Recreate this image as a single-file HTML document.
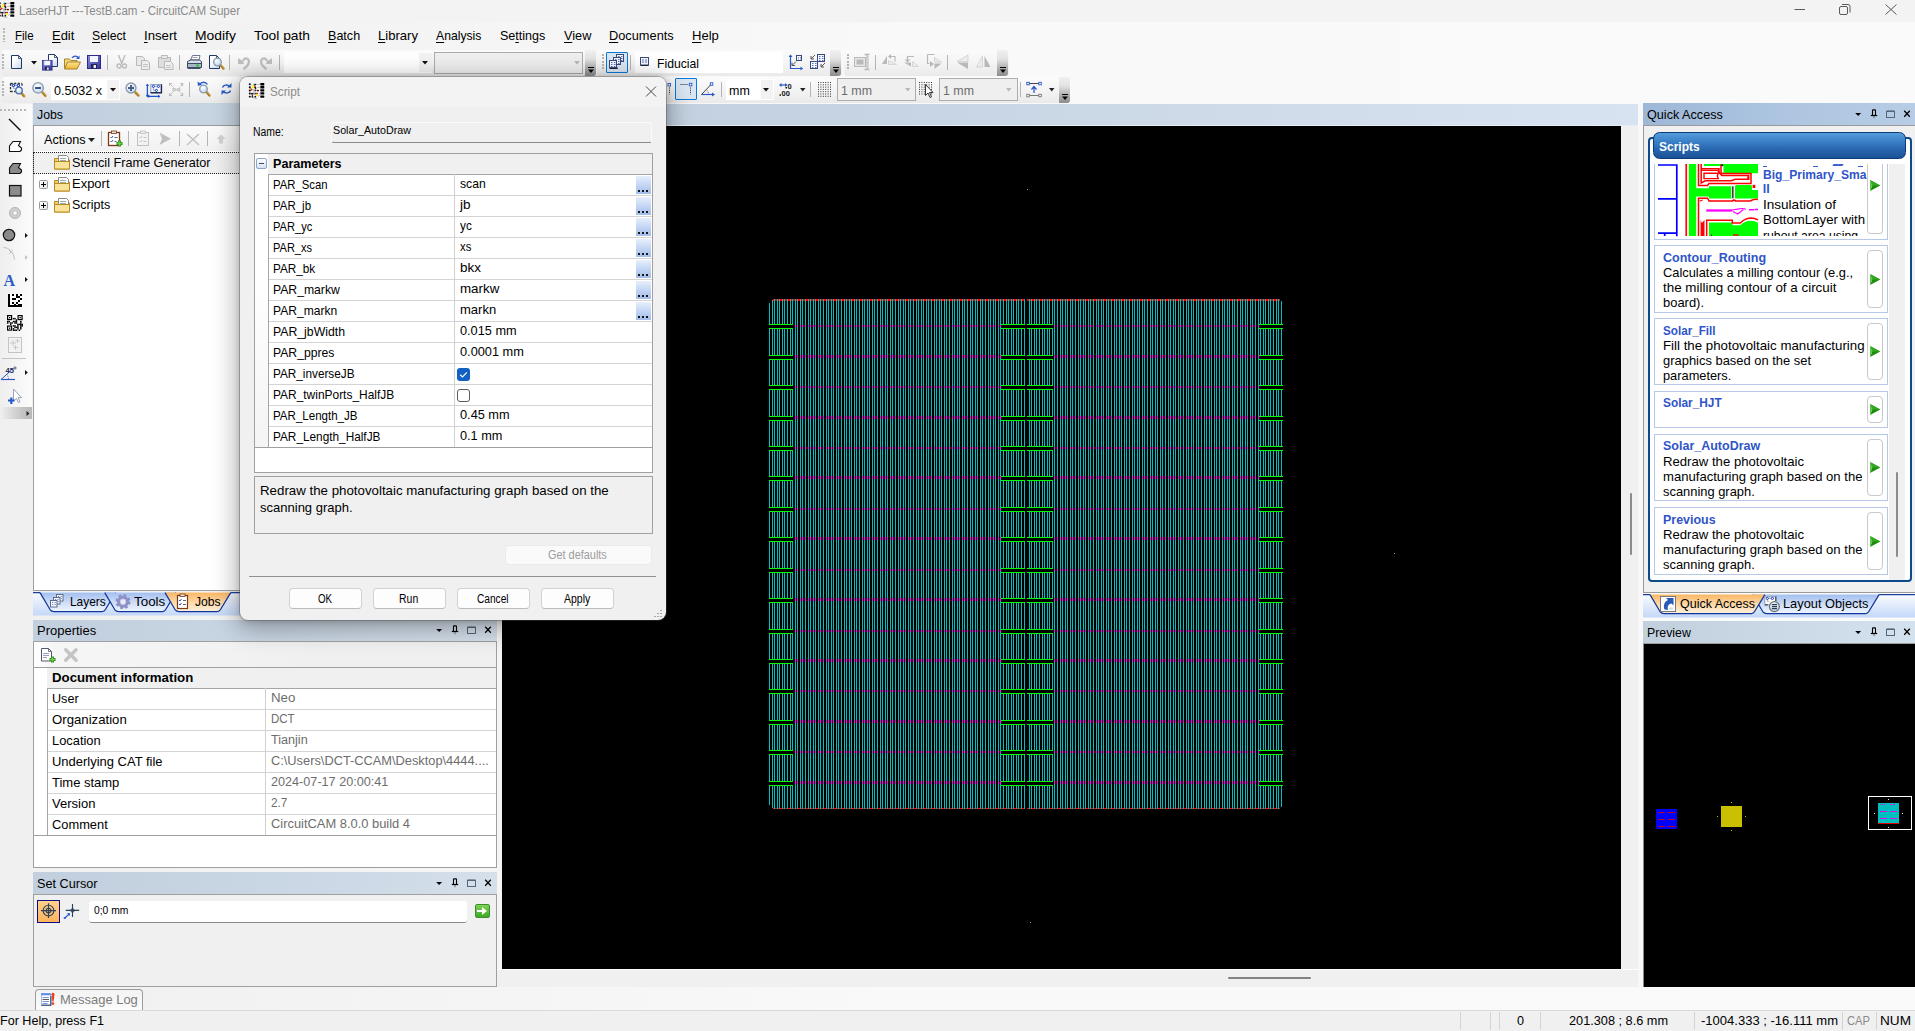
<!DOCTYPE html>
<html><head><meta charset="utf-8"><title>CircuitCAM</title><style>html,body{margin:0;padding:0;}
body{width:1915px;height:1031px;overflow:hidden;background:linear-gradient(90deg,#f0f0f0 0,#f4f4f4 400px,#f9f9f9 900px,#fafafa 100%);font-family:"Liberation Sans",sans-serif;position:relative;}
div{position:absolute;}
.t{white-space:nowrap;transform-origin:0 50%;}
.t u{text-decoration:underline;text-underline-offset:1.5px;text-decoration-thickness:1px;}
.a{position:absolute;display:block;overflow:visible;}
</style></head><body>
<!-- frame -->
<div style="left:0px;top:0px;width:1915px;height:22px;background:#f3f3f3;"></div>
<div class="t" style="left:19px;top:2.5px;height:16px;line-height:16px;font-size:12px;color:#8b8b8b;transform:scaleX(0.9617);">LaserHJT ---TestB.cam - CircuitCAM Super</div>
<svg class="a" style="left:-2.5px;top:2px" width="17" height="16" viewBox="0 0 17 16"><rect x="0" y="0" width="17" height="16" fill="#fbfbfb"/><rect x="12.300" y="0.1" width="4" height="2.300" rx=".5" fill="#000"/><rect x=".8" y="0.3" width="2" height="1.900" rx=".6" fill="#111"/><rect x="12.300" y="3.1" width="4" height="2.300" rx=".5" fill="#000"/><rect x=".8" y="3.3" width="2" height="1.900" rx=".6" fill="#111"/><rect x="12.300" y="6.3" width="4" height="2.300" rx=".5" fill="#000"/><rect x=".8" y="6.5" width="2" height="1.900" rx=".6" fill="#111"/><rect x="12.300" y="9.3" width="4" height="2.300" rx=".5" fill="#000"/><rect x=".8" y="9.5" width="2" height="1.900" rx=".6" fill="#111"/><rect x="12.300" y="12.5" width="4" height="2.300" rx=".5" fill="#000"/><rect x=".8" y="12.7" width="2" height="1.900" rx=".6" fill="#111"/><path d="M8.500 1.300h4M9 4.300h3.500M11 10.400h1.500M10 13.300l1.500-.8h1M2.500 1l1.500 1.500M5 14.500q2 1.800 4.500 .5" fill="none" stroke="#8a8a8a" stroke-width=".6"/><circle cx="6.3" cy="1.3" r="0.9" fill="#0a8a96"/><circle cx="7.6" cy="1.6" r="0.8" fill="#111"/><circle cx="6.6" cy="2.8" r="0.9" fill="#ff1010"/><circle cx="5.3" cy="2.6" r="0.9" fill="#f4f000"/><circle cx="4.6" cy="4.5" r="1" fill="#f4f000"/><circle cx="2.8" cy="5.4" r="0.7" fill="#8a8a10"/><circle cx="3.7" cy="6.7" r="0.9" fill="#ff1010"/><circle cx="7.2" cy="4.6" r="1" fill="#111"/><circle cx="7.6" cy="5.7" r="0.8" fill="#111"/><circle cx="7.2" cy="7.6" r="0.8" fill="#111"/><circle cx="9.3" cy="7.6" r="0.8" fill="#111"/><circle cx="10.3" cy="7.6" r="0.8" fill="#a00"/><circle cx="7.2" cy="10.6" r="0.8" fill="#111"/><circle cx="8.3" cy="10.5" r="0.8" fill="#8a0aa0"/><circle cx="9.3" cy="10.6" r="0.8" fill="#c01010"/><circle cx="8.8" cy="11.9" r="1.1" fill="#f4f000"/><circle cx="4" cy="10.8" r="1" fill="#111"/><circle cx="5" cy="10.8" r="0.8" fill="#111"/><circle cx="4.4" cy="12.7" r="0.8" fill="#a00"/><circle cx="4.4" cy="13.8" r="0.9" fill="#111"/><circle cx="7.3" cy="13.7" r="0.9" fill="#111"/><path d="M6 6q-1 3 1 6" fill="none" stroke="#9a9a9a" stroke-width=".9"/></svg>
<svg class="a" style="left:1790px;top:0" width="120" height="22" viewBox="0 0 120 22" fill="none" stroke="#5a5a5a" stroke-width="1"><path d="M4.5 9.5h10.5"/><rect x="49.5" y="6.5" width="8" height="8" rx="1.5"/><path d="M52 4.5h6a2 2 0 0 1 2 2v6"/><path d="M95.5 4.5l11 10M106.5 4.5l-11 10"/></svg>
<div style="left:0px;top:22px;width:1915px;height:28px;background:linear-gradient(90deg,#f0f0f0 0,#f4f4f4 400px,#f9f9f9 900px,#fafafa 100%);"></div>
<div style="left:2.5px;top:27.5px;width:2px;height:14px;background:repeating-linear-gradient(#b8b8b8 0 2px,transparent 2px 3.300px);"></div>
<div class="t" style="left:15.4px;top:27.0px;height:17px;line-height:17px;font-size:13.3px;color:#000;transform:scaleX(0.8683);"><u>F</u>ile</div>
<div class="t" style="left:51.9px;top:27.0px;height:17px;line-height:17px;font-size:13.3px;color:#000;transform:scaleX(0.9735);"><u>E</u>dit</div>
<div class="t" style="left:92.1px;top:27.0px;height:17px;line-height:17px;font-size:13.3px;color:#000;transform:scaleX(0.9174);"><u>S</u>elect</div>
<div class="t" style="left:144px;top:27.0px;height:17px;line-height:17px;font-size:13.3px;color:#000;transform:scaleX(0.9929);"><u>I</u>nsert</div>
<div class="t" style="left:194.8px;top:27.0px;height:17px;line-height:17px;font-size:13.3px;color:#000;transform:scaleX(1.0445);"><u>M</u>odify</div>
<div class="t" style="left:254px;top:27.0px;height:17px;line-height:17px;font-size:13.3px;color:#000;transform:scaleX(1.0382);">Tool <u>p</u>ath</div>
<div class="t" style="left:327.9px;top:27.0px;height:17px;line-height:17px;font-size:13.3px;color:#000;transform:scaleX(0.9441);"><u>B</u>atch</div>
<div class="t" style="left:377.9px;top:27.0px;height:17px;line-height:17px;font-size:13.3px;color:#000;transform:scaleX(0.9822);"><u>L</u>ibrary</div>
<div class="t" style="left:436px;top:27.0px;height:17px;line-height:17px;font-size:13.3px;color:#000;transform:scaleX(0.9166);"><u>A</u>nalysis</div>
<div class="t" style="left:500px;top:27.0px;height:17px;line-height:17px;font-size:13.3px;color:#000;transform:scaleX(0.9431);">Se<u>t</u>tings</div>
<div class="t" style="left:563.6px;top:27.0px;height:17px;line-height:17px;font-size:13.3px;color:#000;transform:scaleX(0.9583);"><u>V</u>iew</div>
<div class="t" style="left:608.9px;top:27.0px;height:17px;line-height:17px;font-size:13.3px;color:#000;transform:scaleX(0.9621);"><u>D</u>ocuments</div>
<div class="t" style="left:692px;top:27.0px;height:17px;line-height:17px;font-size:13.3px;color:#000;transform:scaleX(0.9801);"><u>H</u>elp</div>
<div style="left:2px;top:50px;width:594px;height:26px;background:linear-gradient(#fbfbfb,#f4f4f4 50%,#eaeaea);border-radius:3px;"></div>
<div style="left:597px;top:50px;width:245px;height:26px;background:linear-gradient(#fbfbfb,#f4f4f4 50%,#eaeaea);border-radius:3px;"></div>
<div style="left:844px;top:50px;width:165px;height:26px;background:linear-gradient(#fbfbfb,#f4f4f4 50%,#eaeaea);border-radius:3px;"></div>
<div style="left:2px;top:77px;width:238px;height:26px;background:linear-gradient(#fbfbfb,#f4f4f4 50%,#eaeaea);border-radius:3px;"></div>
<div style="left:662px;top:77px;width:408px;height:26px;background:linear-gradient(#fbfbfb,#f4f4f4 50%,#eaeaea);border-radius:3px;"></div>
<div style="left:0px;top:1010px;width:1915px;height:21px;background:#f0f0f0;border-top:1px solid #d9d9d9;box-sizing:border-box;"></div>
<div class="t" style="left:0px;top:1012.5px;height:16px;line-height:16px;font-size:12.6px;color:#000;transform:scaleX(0.9978);">For Help, press F1</div>
<div style="left:1460px;top:1012px;width:1px;height:18px;background:#d4d4d4;"></div>
<div style="left:1490px;top:1012px;width:1px;height:18px;background:#d4d4d4;"></div>
<div style="left:1499px;top:1012px;width:1px;height:18px;background:#d4d4d4;"></div>
<div style="left:1540px;top:1012px;width:1px;height:18px;background:#d4d4d4;"></div>
<div style="left:1694px;top:1012px;width:1px;height:18px;background:#d4d4d4;"></div>
<div style="left:1842px;top:1012px;width:1px;height:18px;background:#d4d4d4;"></div>
<div style="left:1876px;top:1012px;width:1px;height:18px;background:#d4d4d4;"></div>
<div class="t" style="left:1517px;top:1012.5px;height:16px;line-height:16px;font-size:12.6px;color:#000;">0</div>
<div class="t" style="left:1569px;top:1012.5px;height:16px;line-height:16px;font-size:12.6px;color:#000;transform:scaleX(1.0105);">201.308 ; 8.6 mm</div>
<div class="t" style="left:1701px;top:1012.5px;height:16px;line-height:16px;font-size:12.6px;color:#000;transform:scaleX(1.0342);">-1004.333 ; -16.111 mm</div>
<div class="t" style="left:1847px;top:1012.5px;height:16px;line-height:16px;font-size:12.6px;color:#8a8a8a;transform:scaleX(0.8878);">CAP</div>
<div class="t" style="left:1880px;top:1012.5px;height:16px;line-height:16px;font-size:12.6px;color:#000;transform:scaleX(1.0812);">NUM</div>
<!-- center -->
<div style="left:497px;top:104px;width:1141px;height:21px;background:linear-gradient(90deg,#c1cfde,#c6d3e2 30%,#d0dcea 70%,#d7e3f0);"></div>
<div style="left:497px;top:125px;width:1141px;height:1px;background:#e6edf5;"></div>
<div style="left:1638px;top:104px;width:5px;height:883px;background:#f8f8f8;"></div>
<div style="left:502px;top:126px;width:1119px;height:843px;background:#000;"></div>
<div style="left:1621px;top:126px;width:17px;height:861px;background:#f0f0f0;"></div>
<div style="left:1629.5px;top:493px;width:2px;height:62px;background:#8c8c8c;border-radius:1px;"></div>
<div style="left:497px;top:969px;width:1141px;height:18px;background:#f0f0f0;"></div>
<div style="left:1228px;top:977px;width:83px;height:2px;background:#828282;border-radius:1px;"></div>
<div style="left:497px;top:969px;width:1141px;height:1px;background:#fdfdfd;"></div>
<div style="left:1027px;top:189px;width:1px;height:1px;background:#9a9a9a;"></div>
<div style="left:1394px;top:553px;width:1px;height:1px;background:#9a9a9a;"></div>
<div style="left:1030px;top:922px;width:1px;height:1px;background:#9a9a9a;"></div>
<svg class="a" style="left:769px;top:299px" width="514" height="510" viewBox="0 0 514 510" shape-rendering="crispEdges"><defs><pattern id="pc" width="18" height="4" patternUnits="userSpaceOnUse"><rect x="0" y="0" width="1" height="4" fill="#00bfbf"/><rect x="3" y="0" width="1" height="4" fill="#00bfbf"/><rect x="5" y="0" width="1" height="4" fill="#00bfbf"/><rect x="8" y="0" width="1" height="4" fill="#00bfbf"/><rect x="10" y="0" width="1" height="4" fill="#00bfbf"/><rect x="13" y="0" width="1" height="4" fill="#00bfbf"/><rect x="15" y="0" width="1" height="4" fill="#00bfbf"/></pattern><pattern id="pm" width="18" height="4" patternUnits="userSpaceOnUse"><rect x="0" y="0" width="1" height="4" fill="#ff00ff"/><rect x="3" y="0" width="1" height="4" fill="#ff00ff"/><rect x="5" y="0" width="1" height="4" fill="#ff00ff"/><rect x="8" y="0" width="1" height="4" fill="#ff00ff"/><rect x="10" y="0" width="1" height="4" fill="#ff00ff"/><rect x="13" y="0" width="1" height="4" fill="#ff00ff"/><rect x="15" y="0" width="1" height="4" fill="#ff00ff"/></pattern></defs><rect x="3" y="0" width="508" height="2" fill="#ff0000"/><rect x="3" y="509" width="508" height="1" fill="#ff0000"/><rect x="0" y="0" width="514" height="510" fill="url(#pc)"/><path d="M0 0h4L0 4zM514 0h-4l4 4zM0 510h4L0 506zM514 510h-4l4 -4z" fill="#000"/><rect x="24" y="26" width="208" height="2" fill="#000"/><rect x="24" y="26" width="208" height="2" fill="url(#pm)"/><rect x="284" y="26" width="206" height="2" fill="#000"/><rect x="284" y="26" width="206" height="2" fill="url(#pm)"/><rect x="0" y="25" width="24" height="5" fill="#000"/><rect x="0" y="25" width="24" height="1" fill="#00ff00"/><rect x="0" y="29" width="24" height="1" fill="#00ff00"/><rect x="232" y="25" width="52" height="5" fill="#000"/><rect x="232" y="25" width="52" height="1" fill="#00ff00"/><rect x="232" y="29" width="52" height="1" fill="#00ff00"/><rect x="490" y="25" width="24" height="5" fill="#000"/><rect x="490" y="25" width="24" height="1" fill="#00ff00"/><rect x="490" y="29" width="24" height="1" fill="#00ff00"/><rect x="24" y="56" width="208" height="3" fill="#000"/><rect x="24" y="56" width="208" height="3" fill="url(#pm)"/><rect x="284" y="56" width="206" height="3" fill="#000"/><rect x="284" y="56" width="206" height="3" fill="url(#pm)"/><rect x="0" y="56" width="24" height="5" fill="#000"/><rect x="0" y="56" width="24" height="1" fill="#00ff00"/><rect x="0" y="60" width="24" height="1" fill="#00ff00"/><rect x="232" y="56" width="52" height="5" fill="#000"/><rect x="232" y="56" width="52" height="1" fill="#00ff00"/><rect x="232" y="60" width="52" height="1" fill="#00ff00"/><rect x="490" y="56" width="24" height="5" fill="#000"/><rect x="490" y="56" width="24" height="1" fill="#00ff00"/><rect x="490" y="60" width="24" height="1" fill="#00ff00"/><rect x="24" y="87" width="208" height="2" fill="#000"/><rect x="24" y="87" width="208" height="2" fill="url(#pm)"/><rect x="284" y="87" width="206" height="2" fill="#000"/><rect x="284" y="87" width="206" height="2" fill="url(#pm)"/><rect x="0" y="86" width="24" height="5" fill="#000"/><rect x="0" y="86" width="24" height="1" fill="#00ff00"/><rect x="0" y="90" width="24" height="1" fill="#00ff00"/><rect x="232" y="86" width="52" height="5" fill="#000"/><rect x="232" y="86" width="52" height="1" fill="#00ff00"/><rect x="232" y="90" width="52" height="1" fill="#00ff00"/><rect x="490" y="86" width="24" height="5" fill="#000"/><rect x="490" y="86" width="24" height="1" fill="#00ff00"/><rect x="490" y="90" width="24" height="1" fill="#00ff00"/><rect x="24" y="117" width="208" height="3" fill="#000"/><rect x="24" y="117" width="208" height="3" fill="url(#pm)"/><rect x="284" y="117" width="206" height="3" fill="#000"/><rect x="284" y="117" width="206" height="3" fill="url(#pm)"/><rect x="0" y="117" width="24" height="5" fill="#000"/><rect x="0" y="117" width="24" height="1" fill="#00ff00"/><rect x="0" y="121" width="24" height="1" fill="#00ff00"/><rect x="232" y="117" width="52" height="5" fill="#000"/><rect x="232" y="117" width="52" height="1" fill="#00ff00"/><rect x="232" y="121" width="52" height="1" fill="#00ff00"/><rect x="490" y="117" width="24" height="5" fill="#000"/><rect x="490" y="117" width="24" height="1" fill="#00ff00"/><rect x="490" y="121" width="24" height="1" fill="#00ff00"/><rect x="24" y="148" width="208" height="2" fill="#000"/><rect x="24" y="148" width="208" height="2" fill="url(#pm)"/><rect x="284" y="148" width="206" height="2" fill="#000"/><rect x="284" y="148" width="206" height="2" fill="url(#pm)"/><rect x="0" y="147" width="24" height="5" fill="#000"/><rect x="0" y="147" width="24" height="1" fill="#00ff00"/><rect x="0" y="151" width="24" height="1" fill="#00ff00"/><rect x="232" y="147" width="52" height="5" fill="#000"/><rect x="232" y="147" width="52" height="1" fill="#00ff00"/><rect x="232" y="151" width="52" height="1" fill="#00ff00"/><rect x="490" y="147" width="24" height="5" fill="#000"/><rect x="490" y="147" width="24" height="1" fill="#00ff00"/><rect x="490" y="151" width="24" height="1" fill="#00ff00"/><rect x="24" y="177" width="208" height="3" fill="#000"/><rect x="24" y="177" width="208" height="3" fill="url(#pm)"/><rect x="284" y="177" width="206" height="3" fill="#000"/><rect x="284" y="177" width="206" height="3" fill="url(#pm)"/><rect x="0" y="177" width="24" height="5" fill="#000"/><rect x="0" y="177" width="24" height="1" fill="#00ff00"/><rect x="0" y="181" width="24" height="1" fill="#00ff00"/><rect x="232" y="177" width="52" height="5" fill="#000"/><rect x="232" y="177" width="52" height="1" fill="#00ff00"/><rect x="232" y="181" width="52" height="1" fill="#00ff00"/><rect x="490" y="177" width="24" height="5" fill="#000"/><rect x="490" y="177" width="24" height="1" fill="#00ff00"/><rect x="490" y="181" width="24" height="1" fill="#00ff00"/><rect x="24" y="209" width="208" height="2" fill="#000"/><rect x="24" y="209" width="208" height="2" fill="url(#pm)"/><rect x="284" y="209" width="206" height="2" fill="#000"/><rect x="284" y="209" width="206" height="2" fill="url(#pm)"/><rect x="0" y="208" width="24" height="5" fill="#000"/><rect x="0" y="208" width="24" height="1" fill="#00ff00"/><rect x="0" y="212" width="24" height="1" fill="#00ff00"/><rect x="232" y="208" width="52" height="5" fill="#000"/><rect x="232" y="208" width="52" height="1" fill="#00ff00"/><rect x="232" y="212" width="52" height="1" fill="#00ff00"/><rect x="490" y="208" width="24" height="5" fill="#000"/><rect x="490" y="208" width="24" height="1" fill="#00ff00"/><rect x="490" y="212" width="24" height="1" fill="#00ff00"/><rect x="24" y="238" width="208" height="3" fill="#000"/><rect x="24" y="238" width="208" height="3" fill="url(#pm)"/><rect x="284" y="238" width="206" height="3" fill="#000"/><rect x="284" y="238" width="206" height="3" fill="url(#pm)"/><rect x="0" y="238" width="24" height="5" fill="#000"/><rect x="0" y="238" width="24" height="1" fill="#00ff00"/><rect x="0" y="242" width="24" height="1" fill="#00ff00"/><rect x="232" y="238" width="52" height="5" fill="#000"/><rect x="232" y="238" width="52" height="1" fill="#00ff00"/><rect x="232" y="242" width="52" height="1" fill="#00ff00"/><rect x="490" y="238" width="24" height="5" fill="#000"/><rect x="490" y="238" width="24" height="1" fill="#00ff00"/><rect x="490" y="242" width="24" height="1" fill="#00ff00"/><rect x="24" y="270" width="208" height="2" fill="#000"/><rect x="24" y="270" width="208" height="2" fill="url(#pm)"/><rect x="284" y="270" width="206" height="2" fill="#000"/><rect x="284" y="270" width="206" height="2" fill="url(#pm)"/><rect x="0" y="269" width="24" height="5" fill="#000"/><rect x="0" y="269" width="24" height="1" fill="#00ff00"/><rect x="0" y="273" width="24" height="1" fill="#00ff00"/><rect x="232" y="269" width="52" height="5" fill="#000"/><rect x="232" y="269" width="52" height="1" fill="#00ff00"/><rect x="232" y="273" width="52" height="1" fill="#00ff00"/><rect x="490" y="269" width="24" height="5" fill="#000"/><rect x="490" y="269" width="24" height="1" fill="#00ff00"/><rect x="490" y="273" width="24" height="1" fill="#00ff00"/><rect x="24" y="299" width="208" height="3" fill="#000"/><rect x="24" y="299" width="208" height="3" fill="url(#pm)"/><rect x="284" y="299" width="206" height="3" fill="#000"/><rect x="284" y="299" width="206" height="3" fill="url(#pm)"/><rect x="0" y="299" width="24" height="5" fill="#000"/><rect x="0" y="299" width="24" height="1" fill="#00ff00"/><rect x="0" y="303" width="24" height="1" fill="#00ff00"/><rect x="232" y="299" width="52" height="5" fill="#000"/><rect x="232" y="299" width="52" height="1" fill="#00ff00"/><rect x="232" y="303" width="52" height="1" fill="#00ff00"/><rect x="490" y="299" width="24" height="5" fill="#000"/><rect x="490" y="299" width="24" height="1" fill="#00ff00"/><rect x="490" y="303" width="24" height="1" fill="#00ff00"/><rect x="24" y="331" width="208" height="2" fill="#000"/><rect x="24" y="331" width="208" height="2" fill="url(#pm)"/><rect x="284" y="331" width="206" height="2" fill="#000"/><rect x="284" y="331" width="206" height="2" fill="url(#pm)"/><rect x="0" y="330" width="24" height="5" fill="#000"/><rect x="0" y="330" width="24" height="1" fill="#00ff00"/><rect x="0" y="334" width="24" height="1" fill="#00ff00"/><rect x="232" y="330" width="52" height="5" fill="#000"/><rect x="232" y="330" width="52" height="1" fill="#00ff00"/><rect x="232" y="334" width="52" height="1" fill="#00ff00"/><rect x="490" y="330" width="24" height="5" fill="#000"/><rect x="490" y="330" width="24" height="1" fill="#00ff00"/><rect x="490" y="334" width="24" height="1" fill="#00ff00"/><rect x="24" y="360" width="208" height="3" fill="#000"/><rect x="24" y="360" width="208" height="3" fill="url(#pm)"/><rect x="284" y="360" width="206" height="3" fill="#000"/><rect x="284" y="360" width="206" height="3" fill="url(#pm)"/><rect x="0" y="360" width="24" height="5" fill="#000"/><rect x="0" y="360" width="24" height="1" fill="#00ff00"/><rect x="0" y="364" width="24" height="1" fill="#00ff00"/><rect x="232" y="360" width="52" height="5" fill="#000"/><rect x="232" y="360" width="52" height="1" fill="#00ff00"/><rect x="232" y="364" width="52" height="1" fill="#00ff00"/><rect x="490" y="360" width="24" height="5" fill="#000"/><rect x="490" y="360" width="24" height="1" fill="#00ff00"/><rect x="490" y="364" width="24" height="1" fill="#00ff00"/><rect x="24" y="391" width="208" height="2" fill="#000"/><rect x="24" y="391" width="208" height="2" fill="url(#pm)"/><rect x="284" y="391" width="206" height="2" fill="#000"/><rect x="284" y="391" width="206" height="2" fill="url(#pm)"/><rect x="0" y="390" width="24" height="5" fill="#000"/><rect x="0" y="390" width="24" height="1" fill="#00ff00"/><rect x="0" y="394" width="24" height="1" fill="#00ff00"/><rect x="232" y="390" width="52" height="5" fill="#000"/><rect x="232" y="390" width="52" height="1" fill="#00ff00"/><rect x="232" y="394" width="52" height="1" fill="#00ff00"/><rect x="490" y="390" width="24" height="5" fill="#000"/><rect x="490" y="390" width="24" height="1" fill="#00ff00"/><rect x="490" y="394" width="24" height="1" fill="#00ff00"/><rect x="24" y="421" width="208" height="3" fill="#000"/><rect x="24" y="421" width="208" height="3" fill="url(#pm)"/><rect x="284" y="421" width="206" height="3" fill="#000"/><rect x="284" y="421" width="206" height="3" fill="url(#pm)"/><rect x="0" y="421" width="24" height="5" fill="#000"/><rect x="0" y="421" width="24" height="1" fill="#00ff00"/><rect x="0" y="425" width="24" height="1" fill="#00ff00"/><rect x="232" y="421" width="52" height="5" fill="#000"/><rect x="232" y="421" width="52" height="1" fill="#00ff00"/><rect x="232" y="425" width="52" height="1" fill="#00ff00"/><rect x="490" y="421" width="24" height="5" fill="#000"/><rect x="490" y="421" width="24" height="1" fill="#00ff00"/><rect x="490" y="425" width="24" height="1" fill="#00ff00"/><rect x="24" y="452" width="208" height="2" fill="#000"/><rect x="24" y="452" width="208" height="2" fill="url(#pm)"/><rect x="284" y="452" width="206" height="2" fill="#000"/><rect x="284" y="452" width="206" height="2" fill="url(#pm)"/><rect x="0" y="451" width="24" height="5" fill="#000"/><rect x="0" y="451" width="24" height="1" fill="#00ff00"/><rect x="0" y="455" width="24" height="1" fill="#00ff00"/><rect x="232" y="451" width="52" height="5" fill="#000"/><rect x="232" y="451" width="52" height="1" fill="#00ff00"/><rect x="232" y="455" width="52" height="1" fill="#00ff00"/><rect x="490" y="451" width="24" height="5" fill="#000"/><rect x="490" y="451" width="24" height="1" fill="#00ff00"/><rect x="490" y="455" width="24" height="1" fill="#00ff00"/><rect x="24" y="482" width="208" height="3" fill="#000"/><rect x="24" y="482" width="208" height="3" fill="url(#pm)"/><rect x="284" y="482" width="206" height="3" fill="#000"/><rect x="284" y="482" width="206" height="3" fill="url(#pm)"/><rect x="0" y="482" width="24" height="5" fill="#000"/><rect x="0" y="482" width="24" height="1" fill="#00ff00"/><rect x="0" y="486" width="24" height="1" fill="#00ff00"/><rect x="232" y="482" width="52" height="5" fill="#000"/><rect x="232" y="482" width="52" height="1" fill="#00ff00"/><rect x="232" y="486" width="52" height="1" fill="#00ff00"/><rect x="490" y="482" width="24" height="5" fill="#000"/><rect x="490" y="482" width="24" height="1" fill="#00ff00"/><rect x="490" y="486" width="24" height="1" fill="#00ff00"/><rect x="256" y="0" width="2" height="510" fill="#000"/></svg>
<!-- left -->
<div style="left:0px;top:104px;width:32px;height:315px;background:linear-gradient(90deg,#eeeeee,#f5f5f5 50%,#fbfbfb);"></div>
<div style="left:0px;top:109px;width:27px;height:2px;background:repeating-linear-gradient(90deg,#b8b8b8 0 2px,transparent 2px 4px);"></div>
<div style="left:0px;top:407px;width:32px;height:12px;background:linear-gradient(90deg,#f0f0f0,#c4c4c4 70%,#b8b8b8);"></div>
<svg class="a" style="left:26px;top:411px" width="4" height="5" viewBox="0 0 4 5"><path d="M0.5 0v5l3-2.500z" fill="#222"/></svg>
<div style="left:2px;top:358px;width:24px;height:1px;background:#c4c4c4;"></div>
<div style="left:33px;top:103px;width:464px;height:23px;background:linear-gradient(90deg,#c1cfde,#c7d4e2 40%,#d0dbe8 80%,#d6e0eb);"></div>
<div class="t" style="left:36.7px;top:106.7px;height:16px;line-height:16px;font-size:12.6px;color:#000;transform:scaleX(0.9777);">Jobs</div>
<div style="left:33px;top:125px;width:464px;height:26px;background:linear-gradient(#fbfbfb,#f1f1f1);border:1px solid #9c9c9c;border-bottom:none;box-sizing:border-box;"></div>
<div class="t" style="left:44.4px;top:132.0px;height:16px;line-height:16px;font-size:12.6px;color:#000;transform:scaleX(1.0073);">Actions</div>
<svg class="a" style="left:88px;top:138px" width="7" height="4" viewBox="0 0 7 4"><path d="M0 0h7l-3.500 4z" fill="#222"/></svg>
<div style="left:100.5px;top:131px;width:1px;height:15px;background:#b4b4b4;"></div>
<div style="left:128px;top:131px;width:1px;height:15px;background:#b4b4b4;"></div>
<div style="left:179px;top:131px;width:1px;height:15px;background:#b4b4b4;"></div>
<div style="left:207px;top:131px;width:1px;height:15px;background:#b4b4b4;"></div>
<div style="left:33px;top:151px;width:464px;height:440px;background:#fff;border:1px solid #a0a0a0;border-top:none;box-sizing:border-box;"></div>
<div style="left:34px;top:152px;width:462px;height:22px;background:#f0f0f0;"></div>
<div style="left:33px;top:152px;width:464px;height:22px;border:1px dotted #222;box-sizing:border-box;"></div>
<svg class="a" style="left:53px;top:154px" width="18" height="16" viewBox="0 0 18 16"><path d="M1.5 4.5h5l1.5 1.5h8.500v9h-15z" fill="#f3cf6a" stroke="#b98a1e"/><path d="M5.500 1.500h8l2 2v6h-10z" fill="#fff" stroke="#8a8a8a"/><path d="M7 4.500h6M7 6.500h6" stroke="#9aa" stroke-width="1"/><path d="M1.500 7.500h15v7.500h-15z" fill="#f9e29a" stroke="#b98a1e"/></svg>
<div class="t" style="left:72px;top:155.2px;height:16px;line-height:16px;font-size:12.6px;color:#000;transform:scaleX(1.0049);">Stencil Frame Generator</div>
<svg class="a" style="left:53px;top:176px" width="18" height="16" viewBox="0 0 18 16"><path d="M1.5 4.5h5l1.5 1.5h8.500v9h-15z" fill="#f3cf6a" stroke="#b98a1e"/><path d="M5.500 1.500h8l2 2v6h-10z" fill="#fff" stroke="#8a8a8a"/><path d="M7 4.500h6M7 6.500h6" stroke="#9aa" stroke-width="1"/><path d="M1.500 7.500h15v7.500h-15z" fill="#f9e29a" stroke="#b98a1e"/></svg>
<div class="t" style="left:72.2px;top:176.3px;height:16px;line-height:16px;font-size:12.6px;color:#000;transform:scaleX(1.0305);">Export</div>
<svg class="a" style="left:53px;top:197px" width="18" height="16" viewBox="0 0 18 16"><path d="M1.5 4.5h5l1.5 1.5h8.500v9h-15z" fill="#f3cf6a" stroke="#b98a1e"/><path d="M5.500 1.500h8l2 2v6h-10z" fill="#fff" stroke="#8a8a8a"/><path d="M7 4.500h6M7 6.500h6" stroke="#9aa" stroke-width="1"/><path d="M1.500 7.500h15v7.500h-15z" fill="#f9e29a" stroke="#b98a1e"/></svg>
<div class="t" style="left:72.2px;top:197.2px;height:16px;line-height:16px;font-size:12.6px;color:#000;transform:scaleX(0.9926);">Scripts</div>
<div style="left:39px;top:180px;width:9px;height:9px;border:1px solid #9a9a9a;border-radius:1.500px;background:linear-gradient(135deg,#fff,#e4e4ea);box-sizing:border-box;"></div>
<div style="left:41px;top:184px;width:5px;height:1px;background:#000;"></div>
<div style="left:43px;top:182px;width:1px;height:5px;background:#000;"></div>
<div style="left:39px;top:201px;width:9px;height:9px;border:1px solid #9a9a9a;border-radius:1.500px;background:linear-gradient(135deg,#fff,#e4e4ea);box-sizing:border-box;"></div>
<div style="left:41px;top:205px;width:5px;height:1px;background:#000;"></div>
<div style="left:43px;top:203px;width:1px;height:5px;background:#000;"></div>
<svg class="a" style="left:33px;top:591.5px" width="464" height="23.5" viewBox="0 0 464 23.5"><defs><linearGradient id="tb1" x1="0" y1="0" x2="0" y2="1"><stop offset="0" stop-color="#fbfcff"/><stop offset="1" stop-color="#c4d8f8"/></linearGradient><linearGradient id="ti1" x1="0" y1="0" x2="0" y2="1"><stop offset="0" stop-color="#a3bff0"/><stop offset=".55" stop-color="#cfdff8"/><stop offset="1" stop-color="#f0f5fd"/></linearGradient><linearGradient id="ta1" x1="0" y1="0" x2="0" y2="1"><stop offset="0" stop-color="#fbb765"/><stop offset=".5" stop-color="#fdd7a6"/><stop offset="1" stop-color="#fef0dc"/></linearGradient></defs><rect width="464" height="23.5" fill="url(#tb1)"/><path d="M0 .6H7.0M197.8 .6H464" stroke="#1c3f9a" stroke-width="1.200"/><path d="M7.0 .6L17.0 17.500Q18.5 19.500 21.0 19.500H69.2Q71.2 19.500 72.4 17.500L82.7 .6z" fill="url(#ti1)"/><path d="M7.0 .6L17.0 17.500Q18.5 19.500 21.0 19.500H69.2Q71.2 19.500 72.4 17.500L82.7 .6" fill="none" stroke="#12379a" stroke-width="1.250"/><path d="M71.7 .6L81.7 17.500Q83.2 19.500 85.7 19.500H129.5Q131.5 19.500 132.7 17.500L143.0 .6z" fill="url(#ti1)"/><path d="M71.7 .6L81.7 17.500Q83.2 19.500 85.7 19.500H129.5Q131.5 19.500 132.7 17.500L143.0 .6" fill="none" stroke="#12379a" stroke-width="1.250"/><path d="M132.0 .6L142.0 17.500Q143.5 19.500 146.0 19.500H184.3Q186.3 19.500 187.5 17.500L197.8 .6z" fill="url(#ta1)"/><path d="M132.0 .6L142.0 17.500Q143.5 19.500 146.0 19.500H184.3Q186.3 19.500 187.5 17.500L197.8 .6" fill="none" stroke="#12379a" stroke-width="1.250"/></svg>
<div class="t" style="left:69.6px;top:594.3px;height:16px;line-height:16px;font-size:12.6px;color:#000;transform:scaleX(0.9449);">Layers</div>
<div class="t" style="left:134.3px;top:594.3px;height:16px;line-height:16px;font-size:12.6px;color:#000;transform:scaleX(1.0650);">Tools</div>
<div class="t" style="left:194.7px;top:594.3px;height:16px;line-height:16px;font-size:12.6px;color:#000;transform:scaleX(0.9664);">Jobs</div>
<div style="left:33px;top:619.5px;width:464px;height:21.5px;background:linear-gradient(90deg,#c1cfde,#c7d4e2 40%,#d0dbe8 80%,#d6e0eb);"></div>
<div class="t" style="left:37.2px;top:622.8px;height:16px;line-height:16px;font-size:12.6px;color:#000;transform:scaleX(1.0318);">Properties</div>
<svg class="a" style="left:434.2px;top:620px" width="60" height="21" viewBox="0 0 60 21"><path d="M2.200 9h5.900l-2.950 3z" fill="#000"/><path d="M19.500 11.500v-5q0-.600 .600-.600h1.800q.600 0 .600 .600v5" fill="none" stroke="#000" stroke-width="1.100"/><path d="M17.800 11.500h6.400" stroke="#000" stroke-width="1.200"/><path d="M21 12v2.200" stroke="#445" stroke-width=".8"/><rect x="33.500" y="7.500" width="8" height="6" fill="none" stroke="#56667a" stroke-width="1"/><path d="M33.500 7h8" stroke="#56667a" stroke-width="1.200"/><path d="M51.200 6.700l5.600 6M56.800 6.700l-5.600 6" stroke="#000" stroke-width="1.250" fill="none"/></svg>
<div style="left:33px;top:641px;width:464px;height:227px;background:#fff;border:1px solid #a0a0a0;box-sizing:border-box;"></div>
<div style="left:34px;top:642px;width:462px;height:25px;background:linear-gradient(90deg,#fff,#f6f6f6 4%,#f0f0f0 60%);border-bottom:1px solid #a0a0a0;"></div>
<div style="left:47px;top:668px;width:449px;height:20px;background:#f0f0f0;"></div>
<div class="t" style="left:51.6px;top:670.0px;height:16px;line-height:16px;font-size:12.6px;color:#000;font-weight:bold;transform:scaleX(1.0515);">Document information</div>
<div style="left:47px;top:688px;width:449px;height:1px;background:#a6a6a6;"></div>
<div class="t" style="left:52.1px;top:691.2px;height:16px;line-height:16px;font-size:12.6px;color:#000;transform:scaleX(1.0008);">User</div>
<div class="t" style="left:271px;top:690.2px;height:16px;line-height:16px;font-size:12px;color:#6d6d6d;transform:scaleX(1.1083);">Neo</div>
<div style="left:47px;top:709px;width:449px;height:1px;background:#d4d4d4;"></div>
<div class="t" style="left:52.1px;top:712.2px;height:16px;line-height:16px;font-size:12.6px;color:#000;transform:scaleX(1.0466);">Organization</div>
<div class="t" style="left:271px;top:711.2px;height:16px;line-height:16px;font-size:12px;color:#6d6d6d;transform:scaleX(0.9566);">DCT</div>
<div style="left:47px;top:730px;width:449px;height:1px;background:#d4d4d4;"></div>
<div class="t" style="left:52.1px;top:733.2px;height:16px;line-height:16px;font-size:12.6px;color:#000;transform:scaleX(1.0211);">Location</div>
<div class="t" style="left:271px;top:732.2px;height:16px;line-height:16px;font-size:12px;color:#6d6d6d;transform:scaleX(1.0509);">Tianjin</div>
<div style="left:47px;top:751px;width:449px;height:1px;background:#d4d4d4;"></div>
<div class="t" style="left:52.1px;top:754.2px;height:16px;line-height:16px;font-size:12.6px;color:#000;transform:scaleX(1.0300);">Underlying CAT file</div>
<div class="t" style="left:271px;top:753.2px;height:16px;line-height:16px;font-size:12px;color:#6d6d6d;transform:scaleX(1.0675);">C:\Users\DCT-CCAM\Desktop\4444....</div>
<div style="left:47px;top:772px;width:449px;height:1px;background:#d4d4d4;"></div>
<div class="t" style="left:52.1px;top:775.2px;height:16px;line-height:16px;font-size:12.6px;color:#000;transform:scaleX(1.0309);">Time stamp</div>
<div class="t" style="left:271px;top:774.2px;height:16px;line-height:16px;font-size:12px;color:#6d6d6d;transform:scaleX(1.0531);">2024-07-17 20:00:41</div>
<div style="left:47px;top:793px;width:449px;height:1px;background:#d4d4d4;"></div>
<div class="t" style="left:52.1px;top:796.2px;height:16px;line-height:16px;font-size:12.6px;color:#000;transform:scaleX(1.0333);">Version</div>
<div class="t" style="left:271px;top:795.2px;height:16px;line-height:16px;font-size:12px;color:#6d6d6d;transform:scaleX(0.9777);">2.7</div>
<div style="left:47px;top:814px;width:449px;height:1px;background:#d4d4d4;"></div>
<div class="t" style="left:52.1px;top:817.2px;height:16px;line-height:16px;font-size:12.6px;color:#000;transform:scaleX(1.0208);">Comment</div>
<div class="t" style="left:271px;top:816.2px;height:16px;line-height:16px;font-size:12px;color:#6d6d6d;transform:scaleX(1.0744);">CircuitCAM 8.0.0 build 4</div>
<div style="left:34px;top:835px;width:462px;height:1px;background:#a0a0a0;"></div>
<div style="left:47px;top:688px;width:1px;height:147px;background:#a6a6a6;"></div>
<div style="left:265px;top:688px;width:1px;height:147px;background:#d0d0d0;"></div>
<div style="left:33px;top:872px;width:464px;height:22px;background:linear-gradient(90deg,#c1cfde,#c7d4e2 40%,#d0dbe8 80%,#d6e0eb);"></div>
<div class="t" style="left:37.2px;top:875.6px;height:16px;line-height:16px;font-size:12.6px;color:#000;transform:scaleX(1.0055);">Set Cursor</div>
<svg class="a" style="left:434.2px;top:873px" width="60" height="21" viewBox="0 0 60 21"><path d="M2.200 9h5.900l-2.950 3z" fill="#000"/><path d="M19.500 11.500v-5q0-.600 .600-.600h1.800q.600 0 .600 .600v5" fill="none" stroke="#000" stroke-width="1.100"/><path d="M17.800 11.500h6.400" stroke="#000" stroke-width="1.200"/><path d="M21 12v2.200" stroke="#445" stroke-width=".8"/><rect x="33.500" y="7.500" width="8" height="6" fill="none" stroke="#56667a" stroke-width="1"/><path d="M33.500 7h8" stroke="#56667a" stroke-width="1.200"/><path d="M51.200 6.700l5.600 6M56.800 6.700l-5.600 6" stroke="#000" stroke-width="1.250" fill="none"/></svg>
<div style="left:33px;top:894px;width:464px;height:93px;background:#f0f0f0;border:1px solid #a0a0a0;box-sizing:border-box;"></div>
<div style="left:37px;top:900px;width:23px;height:23px;background:linear-gradient(#ffd08c,#ffb45c);border:1.300px solid #0c0c84;box-sizing:border-box;"></div>
<svg class="a" style="left:40px;top:902px" width="17" height="17" viewBox="0 0 17 17" fill="none" stroke="#2c4258" stroke-width="1.150"><circle cx="8.500" cy="8.600" r="5.400"/><circle cx="8.500" cy="8.600" r="2.400"/><path d="M8.500 1.200v14.800M1 8.600h15"/></svg>
<svg class="a" style="left:63px;top:902px" width="18" height="18" viewBox="0 0 18 18" fill="none"><path d="M9.500 2v13M2.800 8.400h13.400" stroke="#2c4258" stroke-width="1.100"/><circle cx="9.500" cy="8.400" r="1.700" fill="none" stroke="#2c4258" stroke-width="1"/><path d="M1.800 16l4.500-4.200" stroke="#1a50d0" stroke-width="1.100"/><path d="M7 11l-3 .6 2.400 2.400z" fill="#1a50d0"/><path d="M.8 15l2 2M2.800 15l-2 2" stroke="#1a50d0" stroke-width=".9"/></svg>
<div style="left:89px;top:901px;width:378px;height:21.5px;background:#fff;border-bottom:1px solid #8a8a8a;border-radius:3px;box-sizing:border-box;"></div>
<div class="t" style="left:93.6px;top:902.8px;height:15px;line-height:15px;font-size:11.4px;color:#000;transform:scaleX(0.9060);">0;0 mm</div>
<div style="left:474.5px;top:904px;width:15px;height:14px;background:linear-gradient(#7dd355,#3fa82a);border:1px solid #3c8f2a;border-radius:2px;box-sizing:border-box;"></div>
<svg class="a" style="left:476px;top:906px" width="12" height="10" viewBox="0 0 12 10"><path d="M1 4h5v-3l5 4-5 4v-3h-5z" fill="#fff"/></svg>
<div style="left:35px;top:989px;width:108px;height:21px;background:linear-gradient(#f3f3f3,#fbfbfb);border:1px solid #9c9c9c;border-bottom:none;border-radius:4px 4px 0 0;box-sizing:border-box;"></div>
<div class="t" style="left:59.6px;top:991.7px;height:16px;line-height:16px;font-size:12.6px;color:#7c7c7c;transform:scaleX(1.0294);">Message Log</div>
<svg class="a" style="left:41px;top:992px" width="15" height="15" viewBox="0 0 15 15"><rect x=".5" y="1.500" width="9" height="11.500" fill="#fff" stroke="#9ab0d8" stroke-width=".8"/><rect x=".3" y="1.300" width="9.300" height="2" fill="#5a8af0"/><path d="M1.500 5.500h6.500M1.500 9.500h6.500M1.500 11.500h5" stroke="#6a8ad0" stroke-width=".9"/><path d="M1.500 7.500h6.500" stroke="#445" stroke-width=".9"/><path d="M.3 13.300h9.600v-9" fill="none" stroke="#1c3c6c" stroke-width="1.100"/><path d="M10.400 2q1.500-2.500 3.200 0l-1 7.500h-1.200z" fill="#ea401c"/><circle cx="12" cy="11.600" r="1.300" fill="#ea401c"/></svg>
<!-- right -->
<div style="left:1643px;top:103px;width:272px;height:22px;background:linear-gradient(90deg,#9db7d7,#adc5e0 50%,#b7cde6);"></div>
<div class="t" style="left:1647.2px;top:106.5px;height:16px;line-height:16px;font-size:12.6px;color:#000;transform:scaleX(1.0027);">Quick Access</div>
<svg class="a" style="left:1853px;top:104px" width="60" height="21" viewBox="0 0 60 21"><path d="M2.200 9h5.900l-2.950 3z" fill="#000"/><path d="M19.500 11.500v-5q0-.600 .600-.600h1.800q.600 0 .600 .600v5" fill="none" stroke="#000" stroke-width="1.100"/><path d="M17.800 11.500h6.400" stroke="#000" stroke-width="1.200"/><path d="M21 12v2.200" stroke="#445" stroke-width=".8"/><rect x="33.500" y="7.500" width="8" height="6" fill="none" stroke="#56667a" stroke-width="1"/><path d="M33.500 7h8" stroke="#56667a" stroke-width="1.200"/><path d="M51.200 6.700l5.600 6M56.800 6.700l-5.600 6" stroke="#000" stroke-width="1.250" fill="none"/></svg>
<div style="left:1643px;top:125px;width:272px;height:468px;background:#f0f0f0;border:1px solid #9a9a9a;border-right:none;box-sizing:border-box;"></div>
<div style="left:1647.5px;top:137px;width:264px;height:444.5px;background:#fff;border:2px solid #0c4a8c;border-radius:4px;box-sizing:border-box;"></div>
<div style="left:1653px;top:132px;width:253px;height:27px;background:linear-gradient(#549cdc,#3a80c6 35%,#2866b0 65%,#1b5296);border:1.500px solid #0c3a76;border-radius:6.500px;box-sizing:border-box;"></div>
<div class="t" style="left:1659.3px;top:138.5px;height:16px;line-height:16px;font-size:12.6px;color:#fff;font-weight:bold;transform:scaleX(0.9534);">Scripts</div>
<div style="left:1889px;top:164px;width:16px;height:416px;background:#f0f0f0;"></div>
<div style="left:1896px;top:472px;width:2px;height:85px;background:#8c8c8c;border-radius:1px;"></div>
<div style="left:1654px;top:164px;width:234px;height:76px;border:1px solid #b7c7e6;box-sizing:border-box;background:#fff;border-top:none;"></div>
<svg class="a" style="left:1658px;top:164px" width="100" height="72" viewBox="0 0 100 72"><rect width="100" height="72" fill="#fff"/><path d="M0 1h19.500M18.800 0.200v72M0 34.800h19M0 69.200h19M6.700 69v3" fill="none" stroke="#0000ff" stroke-width="1.700"/><rect x="27.400" y="0" width="1.700" height="72" fill="#ff0000"/><rect x="30.800" y="0" width="7.400" height="72" fill="#00ff00"/><path d="M46 0h54v9.300h-34.500v-7.400h-19.500z" fill="#00ff00"/><path d="M38 24.200h13v-2h23v12.300h-23v-2h-13z" fill="#00ff00"/><path d="M77 22.500q0-1.500 1.500-1.500h14.500q1 0 1 1.500v3.500h6v8.500h-23z" fill="#00ff00"/><path d="M51 58.500h23.500v2.800h8q4-4.500 10-4.500 4 0 7.500 2v13.200h-49z" fill="#00ff00"/><path d="M40.500 0v21.500h9l1.500-2h42v-10h-28q-2 0-2-2v-7.500" fill="none" stroke="#ff0000" stroke-width="1.500"/><path d="M43.200 0v19l4-2.200h26l4-1.500h13.500v-3.800h-26.500l-3.200-3.500v-3.300h-18" fill="none" stroke="#ff0000" stroke-width="1.500"/><path d="M43.200 6.300h16.500l1.500 2.500 3 3" fill="none" stroke="#ff0000" stroke-width="1.300"/><path d="M46 9.200h14.300l-1 2.700 1 2.700h-14.300z" fill="none" stroke="#ff0000" stroke-width="1.400"/><path d="M89.500 12.500q1.300 1.500 0 3.500" fill="none" stroke="#ff0000" stroke-width="1.300"/><circle cx="64.200" cy="1.200" r="1" fill="#111"/><rect x="94.600" y="20.800" width="2.700" height="3.200" fill="#ff0000"/><rect x="73.200" y="22" width="3.400" height="12.500" fill="#fff"/><rect x="74.200" y="22.300" width="1.300" height="12" fill="#111"/><path d="M40.500 72v-37.800h9l1.500 2.700h23.500q1.500-1.500 3 0h13q2 .5 4-1 2.500-1 5.500-.3" fill="none" stroke="#ff0000" stroke-width="1.500"/><path d="M41.700 37l3-1" stroke="#ff0000" stroke-width="1.200"/><path d="M48.300 46.500h26" stroke="#ff00ff" stroke-width="2.300"/><path d="M74 46l7-1.200q4-.800 7 .5M75 47.500l4.800 2.500 5.500-4.500" fill="none" stroke="#ff00ff" stroke-width="1.200"/><path d="M91 45.800h5M96.500 45.500h3.500" stroke="#ff00ff" stroke-width="1.600"/><path d="M42.600 56l1.300 3 2.600-3v16h-3.900z" fill="#ff0000"/><path d="M48.700 72v-15.700h25.600v2.800h8q4.500-5 10.500-5.200 4 0 7.200 2" fill="none" stroke="#ff0000" stroke-width="1.500"/><path d="M75 71h5.500" stroke="#ff0000" stroke-width="1.400"/><circle cx="53.500" cy="71.300" r=".7" fill="#111"/></svg>
<div class="t" style="left:1762.8px;top:166.7px;height:16px;line-height:16px;font-size:12.6px;color:#2f55c8;font-weight:bold;transform:scaleX(0.9600);">Big_Primary_Sma</div>
<div style="left:1763px;top:165.5px;width:4px;height:1.5px;background:#3a5ecc;"></div>
<div style="left:1813px;top:165.5px;width:5px;height:1.5px;background:#3a5ecc;"></div>
<div style="left:1858px;top:165.5px;width:5px;height:1.5px;background:#3a5ecc;"></div>
<div style="left:1832.5px;top:164px;width:4.5px;height:2px;background:#3a5ecc;transform:skewX(-30deg);"></div>
<div style="left:1838px;top:164px;width:4.5px;height:2px;background:#3a5ecc;transform:skewX(-30deg);"></div>
<div class="t" style="left:1762.8px;top:181.2px;height:16px;line-height:16px;font-size:12.6px;color:#2f55c8;font-weight:bold;">ll</div>
<div class="t" style="left:1762.8px;top:197.0px;height:16px;line-height:16px;font-size:12.6px;color:#000;transform:scaleX(1.0753);">Insulation of</div>
<div class="t" style="left:1762.8px;top:212.4px;height:16px;line-height:16px;font-size:12.6px;color:#000;transform:scaleX(1.0487);">BottomLayer with</div>
<div style="left:1763px;top:228px;width:105px;height:8px;overflow:hidden;"><div class="t" style="left:-.2px;top:0px;font-size:12.6px;line-height:16px;transform:scaleX(.97)">rubout area using</div></div>
<div style="left:1867px;top:164px;width:16px;height:70px;background:#fff;border:1px solid #c9c9c9;border-radius:4px;box-sizing:border-box;border-top:none;border-radius:0 0 4px 4px;"></div><svg class="a" style="left:1869.8px;top:179.5px" width="11" height="11" viewBox="0 0 11 11"><path d="M0 0l10.300 5.500-10.300 5.500 2.300-5.500z" fill="#1c8c0c"/><path d="M0 0l2.300 5.500 8-.0z" fill="#34a822"/><path d="M0 0l2.300 5.500-2.300 5.500z" fill="#5cc44a"/></svg>
<div style="left:1654px;top:245px;width:234px;height:68px;border:1px solid #b7c7e6;box-sizing:border-box;background:#fff;"></div>
<div class="t" style="left:1662.9px;top:249.7px;height:16px;line-height:16px;font-size:12.6px;color:#2f55c8;font-weight:bold;transform:scaleX(0.9955);">Contour_Routing</div>
<div class="t" style="left:1662.9px;top:265.1px;height:16px;line-height:16px;font-size:12.6px;color:#000;transform:scaleX(1.0208);">Calculates a milling contour (e.g.,</div>
<div class="t" style="left:1662.9px;top:280.2px;height:16px;line-height:16px;font-size:12.6px;color:#000;transform:scaleX(1.0636);">the milling contour of a circuit</div>
<div class="t" style="left:1662.9px;top:295.3px;height:16px;line-height:16px;font-size:12.6px;color:#000;transform:scaleX(1.0282);">board).</div>
<div style="left:1867px;top:250px;width:16px;height:58px;background:#fff;border:1px solid #c9c9c9;border-radius:4px;box-sizing:border-box;"></div><svg class="a" style="left:1869.8px;top:273.55px" width="11" height="11" viewBox="0 0 11 11"><path d="M0 0l10.300 5.500-10.300 5.500 2.300-5.500z" fill="#1c8c0c"/><path d="M0 0l2.300 5.500 8-.0z" fill="#34a822"/><path d="M0 0l2.300 5.500-2.300 5.500z" fill="#5cc44a"/></svg>
<div style="left:1654px;top:318px;width:234px;height:67px;border:1px solid #b7c7e6;box-sizing:border-box;background:#fff;"></div>
<div class="t" style="left:1662.9px;top:322.6px;height:16px;line-height:16px;font-size:12.6px;color:#2f55c8;font-weight:bold;transform:scaleX(0.9279);">Solar_Fill</div>
<div class="t" style="left:1662.9px;top:338.0px;height:16px;line-height:16px;font-size:12.6px;color:#000;transform:scaleX(1.0548);">Fill the photovoltaic manufacturing</div>
<div class="t" style="left:1662.9px;top:353.1px;height:16px;line-height:16px;font-size:12.6px;color:#000;transform:scaleX(1.0266);">graphics based on the set</div>
<div class="t" style="left:1662.9px;top:368.2px;height:16px;line-height:16px;font-size:12.6px;color:#000;transform:scaleX(1.0170);">parameters.</div>
<div style="left:1867px;top:323px;width:16px;height:57px;background:#fff;border:1px solid #c9c9c9;border-radius:4px;box-sizing:border-box;"></div><svg class="a" style="left:1869.8px;top:346.29999999999995px" width="11" height="11" viewBox="0 0 11 11"><path d="M0 0l10.300 5.500-10.300 5.500 2.300-5.500z" fill="#1c8c0c"/><path d="M0 0l2.300 5.500 8-.0z" fill="#34a822"/><path d="M0 0l2.300 5.500-2.300 5.500z" fill="#5cc44a"/></svg>
<div style="left:1654px;top:391px;width:234px;height:37px;border:1px solid #b7c7e6;box-sizing:border-box;background:#fff;"></div>
<div class="t" style="left:1662.9px;top:395.4px;height:16px;line-height:16px;font-size:12.6px;color:#2f55c8;font-weight:bold;transform:scaleX(0.9425);">Solar_HJT</div>
<div style="left:1867px;top:396px;width:16px;height:27px;background:#fff;border:1px solid #c9c9c9;border-radius:4px;box-sizing:border-box;"></div><svg class="a" style="left:1869.8px;top:404.2px" width="11" height="11" viewBox="0 0 11 11"><path d="M0 0l10.300 5.500-10.300 5.500 2.300-5.500z" fill="#1c8c0c"/><path d="M0 0l2.300 5.500 8-.0z" fill="#34a822"/><path d="M0 0l2.300 5.500-2.300 5.500z" fill="#5cc44a"/></svg>
<div style="left:1654px;top:434px;width:234px;height:67px;border:1px solid #b7c7e6;box-sizing:border-box;background:#fff;"></div>
<div class="t" style="left:1662.9px;top:438.4px;height:16px;line-height:16px;font-size:12.6px;color:#2f55c8;font-weight:bold;transform:scaleX(0.9923);">Solar_AutoDraw</div>
<div class="t" style="left:1662.9px;top:453.8px;height:16px;line-height:16px;font-size:12.6px;color:#000;transform:scaleX(1.0440);">Redraw the photovoltaic</div>
<div class="t" style="left:1662.9px;top:468.9px;height:16px;line-height:16px;font-size:12.6px;color:#000;transform:scaleX(1.0399);">manufacturing graph based on the</div>
<div class="t" style="left:1662.9px;top:484.0px;height:16px;line-height:16px;font-size:12.6px;color:#000;transform:scaleX(1.0237);">scanning graph.</div>
<div style="left:1867px;top:439px;width:16px;height:57px;background:#fff;border:1px solid #c9c9c9;border-radius:4px;box-sizing:border-box;"></div><svg class="a" style="left:1869.8px;top:462.25px" width="11" height="11" viewBox="0 0 11 11"><path d="M0 0l10.300 5.500-10.300 5.500 2.300-5.500z" fill="#1c8c0c"/><path d="M0 0l2.300 5.500 8-.0z" fill="#34a822"/><path d="M0 0l2.300 5.500-2.300 5.500z" fill="#5cc44a"/></svg>
<div style="left:1654px;top:507px;width:234px;height:68px;border:1px solid #b7c7e6;box-sizing:border-box;background:#fff;"></div>
<div class="t" style="left:1662.9px;top:511.5px;height:16px;line-height:16px;font-size:12.6px;color:#2f55c8;font-weight:bold;transform:scaleX(0.9890);">Previous</div>
<div class="t" style="left:1662.9px;top:526.9px;height:16px;line-height:16px;font-size:12.6px;color:#000;transform:scaleX(1.0440);">Redraw the photovoltaic</div>
<div class="t" style="left:1662.9px;top:542.0px;height:16px;line-height:16px;font-size:12.6px;color:#000;transform:scaleX(1.0399);">manufacturing graph based on the</div>
<div class="t" style="left:1662.9px;top:557.1px;height:16px;line-height:16px;font-size:12.6px;color:#000;transform:scaleX(1.0237);">scanning graph.</div>
<div style="left:1867px;top:512px;width:16px;height:58px;background:#fff;border:1px solid #c9c9c9;border-radius:4px;box-sizing:border-box;"></div><svg class="a" style="left:1869.8px;top:535.5px" width="11" height="11" viewBox="0 0 11 11"><path d="M0 0l10.300 5.500-10.300 5.500 2.300-5.500z" fill="#1c8c0c"/><path d="M0 0l2.300 5.500 8-.0z" fill="#34a822"/><path d="M0 0l2.300 5.500-2.300 5.500z" fill="#5cc44a"/></svg>
<svg class="a" style="left:1643px;top:593.5px" width="272" height="23.5" viewBox="0 0 272 23.5"><defs><linearGradient id="tb2" x1="0" y1="0" x2="0" y2="1"><stop offset="0" stop-color="#fbfcff"/><stop offset="1" stop-color="#c4d8f8"/></linearGradient><linearGradient id="ti2" x1="0" y1="0" x2="0" y2="1"><stop offset="0" stop-color="#a3bff0"/><stop offset=".55" stop-color="#cfdff8"/><stop offset="1" stop-color="#f0f5fd"/></linearGradient><linearGradient id="ta2" x1="0" y1="0" x2="0" y2="1"><stop offset="0" stop-color="#fbb765"/><stop offset=".5" stop-color="#fdd7a6"/><stop offset="1" stop-color="#fef0dc"/></linearGradient></defs><rect width="272" height="23.5" fill="url(#tb2)"/><path d="M0 .6H7.0M236.1 .6H272" stroke="#1c3f9a" stroke-width="1.200"/><path d="M109.7 .6L119.7 17.500Q121.2 19.500 123.7 19.500H222.6Q224.6 19.500 225.8 17.500L236.1 .6z" fill="url(#ti2)"/><path d="M109.7 .6L119.7 17.500Q121.2 19.500 123.7 19.500H222.6Q224.6 19.500 225.8 17.500L236.1 .6" fill="none" stroke="#12379a" stroke-width="1.250"/><path d="M7.0 .6L17.0 17.500Q18.5 19.500 21.0 19.500H108.4Q110.4 19.500 111.6 17.500L121.9 .6z" fill="url(#ta2)"/><path d="M7.0 .6L17.0 17.500Q18.5 19.500 21.0 19.500H108.4Q110.4 19.500 111.6 17.500L121.9 .6" fill="none" stroke="#12379a" stroke-width="1.250"/></svg>
<div class="t" style="left:1679.6px;top:596.3px;height:16px;line-height:16px;font-size:12.6px;color:#000;transform:scaleX(0.9921);">Quick Access</div>
<div class="t" style="left:1783.3px;top:596.3px;height:16px;line-height:16px;font-size:12.6px;color:#000;transform:scaleX(1.0169);">Layout Objects</div>
<svg class="a" style="left:1660px;top:596px" width="16" height="16" viewBox="0 0 16 16"><rect x=".5" y=".5" width="15" height="15" fill="#fff" stroke="#7a7a7a"/><path d="M4.500 13.500c-1.500-4 0-8 3.500-9.500l-2-2h7.500v7.500l-2-2c-3 .5-4.500 3-3.500 6.500z" fill="#2a5ab8"/><path d="M8 13.500h5v-2h-3z" fill="#d4dae2"/></svg>
<svg class="a" style="left:1764px;top:596px" width="17" height="17" viewBox="0 0 17 17"><defs><radialGradient id="lo" cx=".4" cy=".35" r=".8"><stop offset="0" stop-color="#fff"/><stop offset="1" stop-color="#b4d0f4"/></radialGradient></defs><rect x=".8" y=".8" width="11" height="8" fill="#fff" stroke="#9aa0aa" stroke-width="1"/><path d="M11.800 .5v4.500M.8 8.800h3" stroke="#3a4658" stroke-width="1.200"/><path d="M3.300 2.400h5M3.300 2.400v3h2" fill="none" stroke="#8a8a96" stroke-width=".7"/><circle cx="3.300" cy="2.400" r="1.100" fill="#fff" stroke="#1a40c8" stroke-width="1"/><circle cx="8.400" cy="2.400" r="1.100" fill="#fff" stroke="#1a40c8" stroke-width="1"/><circle cx="10.400" cy="10.600" r="5" fill="url(#lo)" stroke="#6e6e72" stroke-width="1.200"/><path d="M7.800 8.600h5.200M7.800 10.600h5.200M7.800 12.600h5.200" stroke="#2a3a52" stroke-width="1.100"/></svg>
<div style="left:1643px;top:621px;width:272px;height:22px;background:linear-gradient(90deg,#c2d0de,#cbd8e6 50%,#d4e1ee);"></div>
<div style="left:1643px;top:643px;width:272px;height:1px;background:#9c9c9c;"></div>
<div class="t" style="left:1647.2px;top:625.2px;height:16px;line-height:16px;font-size:12.6px;color:#000;transform:scaleX(0.9781);">Preview</div>
<svg class="a" style="left:1853px;top:622px" width="60" height="21" viewBox="0 0 60 21"><path d="M2.200 9h5.900l-2.950 3z" fill="#000"/><path d="M19.500 11.500v-5q0-.600 .600-.600h1.800q.600 0 .600 .600v5" fill="none" stroke="#000" stroke-width="1.100"/><path d="M17.800 11.500h6.400" stroke="#000" stroke-width="1.200"/><path d="M21 12v2.200" stroke="#445" stroke-width=".8"/><rect x="33.500" y="7.500" width="8" height="6" fill="none" stroke="#56667a" stroke-width="1"/><path d="M33.500 7h8" stroke="#56667a" stroke-width="1.200"/><path d="M51.200 6.700l5.600 6M56.800 6.700l-5.600 6" stroke="#000" stroke-width="1.250" fill="none"/></svg>
<div style="left:1643px;top:644px;width:272px;height:343px;background:#000;border-left:1px solid #8a8a8a;box-sizing:border-box;"></div>
<div style="left:1656px;top:809px;width:21px;height:20px;background:#0000ff;"></div>
<div style="left:1658px;top:812px;width:7px;height:1px;background:#c8001e;"></div>
<div style="left:1668px;top:812px;width:7px;height:1px;background:#c8001e;"></div>
<div style="left:1658px;top:819px;width:7px;height:1px;background:#c8001e;"></div>
<div style="left:1668px;top:819px;width:7px;height:1px;background:#c8001e;"></div>
<div style="left:1658px;top:826px;width:7px;height:1px;background:#c8001e;"></div>
<div style="left:1668px;top:826px;width:7px;height:1px;background:#c8001e;"></div>
<div style="left:1721px;top:806px;width:21px;height:21px;background:#c8c000;"></div>
<div style="left:1731px;top:802px;width:1px;height:1px;background:#c8c000;"></div>
<div style="left:1731px;top:830px;width:1px;height:1px;background:#c8c000;"></div>
<div style="left:1717px;top:816px;width:1px;height:1px;background:#c8c000;"></div>
<div style="left:1745px;top:816px;width:1px;height:1px;background:#c8c000;"></div>
<div style="left:1868px;top:796px;width:44px;height:34px;border:1px solid #fff;box-sizing:border-box;"></div>
<div style="left:1878px;top:803px;width:21px;height:20px;background:#00bfbf;"></div>
<div style="left:1878px;top:823px;width:21px;height:1px;background:#e00000;"></div>
<div style="left:1880px;top:811px;width:7px;height:1px;background:#ee00ee;"></div>
<div style="left:1890px;top:811px;width:7px;height:1px;background:#ee00ee;"></div>
<div style="left:1880px;top:818px;width:7px;height:1px;background:#ee00ee;"></div>
<div style="left:1890px;top:818px;width:7px;height:1px;background:#ee00ee;"></div>
<div style="left:1880px;top:804px;width:1px;height:1px;background:#ee00ee;"></div>
<div style="left:1882px;top:804px;width:1px;height:1px;background:#ee00ee;"></div>
<div style="left:1884px;top:804px;width:1px;height:1px;background:#ee00ee;"></div>
<div style="left:1890px;top:804px;width:2px;height:1px;background:#ee00ee;"></div>
<div style="left:1893px;top:804px;width:2px;height:1px;background:#ee00ee;"></div>
<div style="left:1888px;top:799px;width:1px;height:1px;background:#e8e8e8;"></div>
<div style="left:1888px;top:827px;width:1px;height:1px;background:#e8e8e8;"></div>
<div style="left:1874px;top:813px;width:1px;height:1px;background:#e8e8e8;"></div>
<div style="left:1902px;top:813px;width:1px;height:1px;background:#e8e8e8;"></div>
<!-- icons -->
<div style="left:2px;top:54px;width:2px;height:15px;background:repeating-linear-gradient(#b4b4b4 0 2px,transparent 2px 3.300px);"></div>
<svg class="a" style="left:10px;top:54px" width="95" height="17" viewBox="0 0 95 17" ><defs><linearGradient id="gdoc" x1="0" y1="0" x2="1" y2="1"><stop offset=".3" stop-color="#fff"/><stop offset="1" stop-color="#c9d6ee"/></linearGradient><linearGradient id="gdsk" x1="0" y1="0" x2="1" y2="1"><stop offset="0" stop-color="#8a8ee6"/><stop offset="1" stop-color="#34349a"/></linearGradient><linearGradient id="gfold" x1="0" y1="0" x2="0" y2="1"><stop offset="0" stop-color="#fbe59a"/><stop offset="1" stop-color="#eeb630"/></linearGradient><radialGradient id="glens" cx=".4" cy=".35" r=".7"><stop offset="0" stop-color="#fff"/><stop offset="1" stop-color="#b8d4f0"/></radialGradient></defs><path d="M1.5 1.5h7l3 3v10h-10z" fill="url(#gdoc)" stroke="#1f3864"/><path d="M8.5 1.5v3h3" fill="none" stroke="#1f3864" stroke-width=".8"/><path d="M38.5 0.5h6l3 3v9h-9z" fill="url(#gdoc)" stroke="#1f3864"/><path d="M44.5 0.5v3h3" fill="none" stroke="#1f3864" stroke-width=".8"/><g transform="translate(32,6) scale(0.75)"><rect x=".5" y=".5" width="13" height="13" fill="url(#gdsk)" stroke="#2a2a8a"/><rect x="3" y="1" width="8" height="6" fill="#f4f6ff"/><rect x="4" y="9" width="6" height="4.500" fill="#23234a"/><rect x="6.500" y="10" width="2.500" height="3" fill="#e8e8f0"/></g><path d="M54.500 15v-10h5l1.500 1.500h6v2" fill="#f5d67a" stroke="#a8842a"/><path d="M54.500 15l3-7h13l-3.500 7z" fill="url(#gfold)" stroke="#a8842a"/><path d="M62 4c1.500-2.500 5-2.500 6.500 0" fill="none" stroke="#2a5ac8" stroke-width="1.200"/><path d="M69.500 1.500v3.500h-3.500z" fill="#2a5ac8"/><g transform="translate(77,1) scale(1.0)"><rect x=".5" y=".5" width="13" height="13" fill="url(#gdsk)" stroke="#2a2a8a"/><rect x="3" y="1" width="8" height="6" fill="#f4f6ff"/><rect x="4" y="9" width="6" height="4.500" fill="#23234a"/><rect x="6.500" y="10" width="2.500" height="3" fill="#e8e8f0"/></g></svg>
<svg class="a" style="left:31px;top:61px" width="6" height="3.5" viewBox="0 0 6 3.5" ><path d="M0 0h6l-3.0 3.500z" fill="#111"/></svg>
<div style="left:107px;top:55px;width:1px;height:15px;background:#b4b4b4;"></div>
<svg class="a" style="left:115px;top:54px" width="62" height="17" viewBox="0 0 62 17" ><path d="M3.500 1l3.500 9M10 1l-3.500 9" stroke="#b9b9b9" stroke-width="1.300" fill="none"/><circle cx="4" cy="12" r="2" fill="none" stroke="#b9b9b9" stroke-width="1.300"/><circle cx="9.500" cy="12" r="2" fill="none" stroke="#b9b9b9" stroke-width="1.300"/><path d="M21.500 2.500h6l2 2v7h-8z" fill="#e9e9e9" stroke="#b9b9b9"/><path d="M26.500 6.500h6l2 2v7h-8z" fill="#ededed" stroke="#b9b9b9"/><path d="M28 10.500h5M28 12.500h5" stroke="#b9b9b9" stroke-width=".8"/><path d="M43.500 3.500h12v10h-12z" fill="#dedede" stroke="#b9b9b9"/><path d="M46.500 1.500h6v3h-6z" fill="#e8e8e8" stroke="#b9b9b9"/><path d="M49.500 7.500h6l2.500 2.500v5.500h-8.500z" fill="#f0f0f0" stroke="#b9b9b9"/><path d="M51 11.500h5M51 13.500h5" stroke="#b9b9b9" stroke-width=".8"/></svg>
<div style="left:179px;top:55px;width:1px;height:15px;background:#b4b4b4;"></div>
<svg class="a" style="left:186px;top:54px" width="40" height="17" viewBox="0 0 40 17" ><defs><linearGradient id="gdoc" x1="0" y1="0" x2="1" y2="1"><stop offset=".3" stop-color="#fff"/><stop offset="1" stop-color="#c9d6ee"/></linearGradient><linearGradient id="gdsk" x1="0" y1="0" x2="1" y2="1"><stop offset="0" stop-color="#8a8ee6"/><stop offset="1" stop-color="#34349a"/></linearGradient><linearGradient id="gfold" x1="0" y1="0" x2="0" y2="1"><stop offset="0" stop-color="#fbe59a"/><stop offset="1" stop-color="#eeb630"/></linearGradient><radialGradient id="glens" cx=".4" cy=".35" r=".7"><stop offset="0" stop-color="#fff"/><stop offset="1" stop-color="#b8d4f0"/></radialGradient></defs><path d="M4.500 6l2-4.500h7.500l-1 4.500z" fill="#fff" stroke="#6a7a8c"/><path d="M6.500 3.500h5" stroke="#889" stroke-width=".8"/><path d="M1.500 7.500l3-1.500h9l2 1.500v5h-14z" fill="#d6dde8" stroke="#3a4a66"/><path d="M1.500 9.500h14v4h-14z" fill="#aab6c8" stroke="#3a4a66"/><rect x="10" y="10.500" width="3" height="2" fill="#22cc22"/><path d="M0.500 13.500l1.500 1.500h12l1.500-1.500z" fill="#42506a"/><path d="M23.5 1.5h7l3 3v10h-10z" fill="url(#gdoc)" stroke="#1f3864"/><path d="M30.5 1.5v3h3" fill="none" stroke="#1f3864" stroke-width=".8"/><path d="M34.16 10.66L37.5 14.5" stroke="#c89a3c" stroke-width="2.600" stroke-linecap="round"/><path d="M34.559999999999995 11.56L37.3 15.2" stroke="#7a5a1c" stroke-width=".7"/><circle cx="31.5" cy="8" r="3.8" fill="url(#glens)" stroke="#8e9aa8" stroke-width="1.300"/></svg>
<div style="left:229px;top:55px;width:1px;height:15px;background:#b4b4b4;"></div>
<svg class="a" style="left:238px;top:57px" width="12" height="13" viewBox="0 0 12 13" ><path d="M6.300 11.500c3.200-2.500 5.200-5.500 4.500-8-.800-2.500-3.800-3-5.300-.500" fill="none" stroke="#bfbfbf" stroke-width="2.300" stroke-linecap="round"/><path d="M0 1.200l5.300 3 .5 2.800h-5.800z" fill="#bfbfbf"/></svg>
<svg class="a" style="left:260px;top:57px" width="12" height="13" viewBox="0 0 12 13" ><g transform="translate(12 0) scale(-1 1)"><path d="M6.300 11.500c3.200-2.500 5.200-5.500 4.500-8-.800-2.500-3.800-3-5.300-.500" fill="none" stroke="#bfbfbf" stroke-width="2.300" stroke-linecap="round"/><path d="M0 1.200l5.300 3 .5 2.800h-5.800z" fill="#bfbfbf"/></g></svg>
<div style="left:279px;top:55px;width:1px;height:15px;background:#b4b4b4;"></div>
<div style="left:284px;top:52px;width:148px;height:21px;background:#fff;"></div>
<div style="left:419px;top:53px;width:13px;height:19px;background:#f2f2f2;"></div>
<svg class="a" style="left:421.5px;top:61px" width="6" height="3.5" viewBox="0 0 6 3.5" ><path d="M0 0h6l-3.0 3.500z" fill="#111"/></svg>
<div style="left:434px;top:51.5px;width:149px;height:22px;background:#efefef;border:1px solid #adadad;box-sizing:border-box;"></div>
<svg class="a" style="left:573.5px;top:61px" width="6" height="3.5" viewBox="0 0 6 3.5" ><path d="M0 0h6l-3.0 3.500z" fill="#b8b8b8"/></svg>
<div style="left:584.5px;top:50px;width:11px;height:26px;background:linear-gradient(#f0f0f0 0%,#e2e2e2 35%,#a8a8a8 75%,#8c8c8c);border-radius:0 3px 3px 0;"></div><svg class="a" style="left:587.5px;top:67px" width="7" height="7" viewBox="0 0 7 7" ><path d="M0 0.500h6" stroke="#000" stroke-width="1"/><path d="M0 2.500h6l-3 3.500z" fill="#000"/><path d="M1.500 3h6l-3 3.500z" fill="#fff" opacity=".0"/></svg>
<div style="left:602px;top:54px;width:2px;height:15px;background:repeating-linear-gradient(#b4b4b4 0 2px,transparent 2px 3.300px);"></div>
<div style="left:606px;top:51.5px;width:22px;height:21.5px;background:#dae7f3;border:1.500px solid #0a7ad8;box-sizing:border-box;border-radius:1px;"></div>
<svg class="a" style="left:609px;top:54px" width="17" height="17" viewBox="0 0 17 17" ><rect x="7.5" y="0.5" width="7" height="7" fill="#f4f7ff" stroke="#3a4a7a"/><path d="M9 2.5h1.500M12 2.5h1.500M9 4.5h1.500M12 4.5h1.500M9 6.5h1.500M12 6.5h1.500" stroke="#4a66c0" stroke-width=".9"/><rect x="4.5" y="3.5" width="7" height="7" fill="#f4f7ff" stroke="#3a4a7a"/><path d="M6 5.5h1.500M9 5.5h1.500M6 7.5h1.500M9 7.5h1.500M6 9.5h1.500M9 9.5h1.500" stroke="#4a66c0" stroke-width=".9"/><rect x="0.5" y="6.5" width="7" height="7" fill="#f4f7ff" stroke="#3a4a7a"/><path d="M2 8.5h1.500M5 8.5h1.500M2 10.5h1.500M5 10.5h1.500M2 12.5h1.500M5 12.5h1.500" stroke="#4a66c0" stroke-width=".9"/><path d="M.5 14.500h8v-1" stroke="#223" fill="none"/></svg>
<div style="left:630px;top:55px;width:1px;height:15px;background:#b4b4b4;"></div>
<div style="left:635px;top:52px;width:148px;height:21px;background:#fff;"></div>
<svg class="a" style="left:640px;top:57px" width="9" height="9" viewBox="0 0 9 9" ><rect x=".5" y=".5" width="8" height="7.500" fill="#f4f7ff" stroke="#3a4a7a"/><path d="M2 3h2M5 3h2M2 5h2M5 5h2" stroke="#4a66c0" stroke-width=".9"/><path d="M.5 8.500h8" stroke="#223"/></svg>
<div class="t" style="left:656.5px;top:54.5px;height:17px;line-height:17px;font-size:13.3px;color:#000;transform:scaleX(0.9168);">Fiducial</div>
<svg class="a" style="left:787px;top:54px" width="40" height="16" viewBox="0 0 40 16" ><path d="M3.500 1v13.500h12" stroke="#2a5ac8" stroke-width="1.200" fill="none"/><path d="M1.500 3l2-2.500 2 2.500zM13.500 12.500l2.500 2-2.500 2z" fill="#2a5ac8"/><rect x="9.500" y="1.500" width="5" height="5" fill="#f4f7ff" stroke="#3a4a7a"/><path d="M11 3.500h.8M13 3.500h.8M11 5h.8M13 5h.8" stroke="#4a66c0" stroke-width=".8"/><path d="M9 7.500l-4 4M5 8.500v3h3" stroke="#555" stroke-width="1" fill="none"/><rect x="30.5" y="0.5" width="7" height="7" fill="#f4f7ff" stroke="#3a4a7a"/><path d="M32 2.5h1.500M35 2.5h1.500M32 4.5h1.500M35 4.5h1.500M32 6.5h1.500M35 6.5h1.500" stroke="#4a66c0" stroke-width=".9"/><rect x="23.5" y="7.5" width="7" height="7" fill="#f4f7ff" stroke="#3a4a7a"/><path d="M25 9.5h1.500M28 9.5h1.500M25 11.5h1.500M28 11.5h1.500M25 13.5h1.500M28 13.5h1.500" stroke="#4a66c0" stroke-width=".9"/><path d="M28 1l-4 4M24 2v3h3M38 9l-4 4M34 10v3h3" stroke="#555" stroke-width="1" fill="none"/></svg>
<div style="left:829.5px;top:50px;width:11px;height:26px;background:linear-gradient(#f0f0f0 0%,#e2e2e2 35%,#a8a8a8 75%,#8c8c8c);border-radius:0 3px 3px 0;"></div><svg class="a" style="left:832.5px;top:67px" width="7" height="7" viewBox="0 0 7 7" ><path d="M0 0.500h6" stroke="#000" stroke-width="1"/><path d="M0 2.500h6l-3 3.500z" fill="#000"/><path d="M1.500 3h6l-3 3.500z" fill="#fff" opacity=".0"/></svg>
<div style="left:847px;top:54px;width:2px;height:15px;background:repeating-linear-gradient(#b4b4b4 0 2px,transparent 2px 3.300px);"></div>
<svg class="a" style="left:854px;top:53px" width="140" height="18" viewBox="0 0 140 18" ><rect x=".5" y="4.500" width="11" height="9" fill="#e6e6e6" stroke="#b9b9b9"/><rect x="2.500" y="6.500" width="7" height="5" fill="#b9b9b9"/><path d="M10.500 1.500h5M10.500 16.500h5M13 1.500v15" stroke="#b9b9b9" stroke-width="1.300" fill="none"/><path d="M14.500 3v12" stroke="#d8d8d8"/><path d="M33 3v8h-5z" fill="#b9b9b9"/><path d="M34.500 11.500h8l-8-4z" fill="#ececec" stroke="#cfcfcf" stroke-width=".8"/><path d="M36 3.500h5v5" fill="none" stroke="#b9b9b9" stroke-width="1.200"/><path d="M34 3.500l3-2.500v5z" fill="#b9b9b9"/><path d="M50 9.500h7v4z" fill="#b9b9b9"/><path d="M58.500 13.500v-5l6 5z" fill="#ececec" stroke="#cfcfcf" stroke-width=".8"/><path d="M53.500 8v-4.500h6.500" fill="none" stroke="#b9b9b9" stroke-width="1.200"/><path d="M50.500 6.500h6l-3 3z" fill="#b9b9b9"/><path d="M73.500 1.500h7M73.500 1.500v9h2" fill="none" stroke="#b9b9b9" stroke-width="1.200"/><path d="M76 8v6l4-3z" fill="#b9b9b9"/><path d="M80.500 4.500l7 4.500h-7z" fill="#ececec" stroke="#cfcfcf" stroke-width=".8"/><path d="M80.500 10.500h7l-7 5.500z" fill="#b9b9b9"/><path d="M114 2v6.500h-11z" fill="#ececec" stroke="#cfcfcf" stroke-width=".8"/><path d="M114 9.500v6.500l-11-6.500z" fill="#b9b9b9"/><path d="M128.500 3v11h-6z" fill="#ececec" stroke="#cfcfcf" stroke-width=".8"/><path d="M130.500 3v11h6z" fill="#b9b9b9"/></svg>
<div style="left:875px;top:55px;width:1px;height:15px;background:#b4b4b4;"></div>
<div style="left:947px;top:55px;width:1px;height:15px;background:#b4b4b4;"></div>
<div style="left:997px;top:50px;width:11px;height:26px;background:linear-gradient(#f0f0f0 0%,#e2e2e2 35%,#a8a8a8 75%,#8c8c8c);border-radius:0 3px 3px 0;"></div><svg class="a" style="left:1000px;top:67px" width="7" height="7" viewBox="0 0 7 7" ><path d="M0 0.500h6" stroke="#000" stroke-width="1"/><path d="M0 2.500h6l-3 3.500z" fill="#000"/><path d="M1.500 3h6l-3 3.500z" fill="#fff" opacity=".0"/></svg>
<div style="left:2px;top:81px;width:2px;height:15px;background:repeating-linear-gradient(#b4b4b4 0 2px,transparent 2px 3.300px);"></div>
<svg class="a" style="left:9px;top:81px" width="18" height="17" viewBox="0 0 18 17" ><defs><linearGradient id="gdoc" x1="0" y1="0" x2="1" y2="1"><stop offset=".3" stop-color="#fff"/><stop offset="1" stop-color="#c9d6ee"/></linearGradient><linearGradient id="gdsk" x1="0" y1="0" x2="1" y2="1"><stop offset="0" stop-color="#8a8ee6"/><stop offset="1" stop-color="#34349a"/></linearGradient><linearGradient id="gfold" x1="0" y1="0" x2="0" y2="1"><stop offset="0" stop-color="#fbe59a"/><stop offset="1" stop-color="#eeb630"/></linearGradient><radialGradient id="glens" cx=".4" cy=".35" r=".7"><stop offset="0" stop-color="#fff"/><stop offset="1" stop-color="#b8d4f0"/></radialGradient></defs><path d="M1.500 2.500h11.500M1.500 2.500v8.500M1.500 10.500h5M13 2.500v3" fill="none" stroke="#2a3020" stroke-width="1.300" stroke-dasharray="2.200 1.400"/><path d="M4.400 4.400h5M4.400 4.400v3h2" fill="none" stroke="#7a8ab0" stroke-width=".7"/><circle cx="4.400" cy="4.400" r="1.150" fill="#fff" stroke="#1a40d8" stroke-width="1.100"/><circle cx="9.400" cy="4.400" r="1.150" fill="#fff" stroke="#1a40d8" stroke-width="1.100"/><path d="M12.309999999999999 11.809999999999999L15.2 15.2" stroke="#c89a3c" stroke-width="2.600" stroke-linecap="round"/><path d="M12.709999999999999 12.709999999999999L15.0 15.899999999999999" stroke="#7a5a1c" stroke-width=".7"/><circle cx="10" cy="9.5" r="3.3" fill="url(#glens)" stroke="#4a6aa0" stroke-width="1.300"/></svg>
<svg class="a" style="left:31px;top:81px" width="18" height="17" viewBox="0 0 18 17" ><defs><linearGradient id="gdoc" x1="0" y1="0" x2="1" y2="1"><stop offset=".3" stop-color="#fff"/><stop offset="1" stop-color="#c9d6ee"/></linearGradient><linearGradient id="gdsk" x1="0" y1="0" x2="1" y2="1"><stop offset="0" stop-color="#8a8ee6"/><stop offset="1" stop-color="#34349a"/></linearGradient><linearGradient id="gfold" x1="0" y1="0" x2="0" y2="1"><stop offset="0" stop-color="#fbe59a"/><stop offset="1" stop-color="#eeb630"/></linearGradient><radialGradient id="glens" cx=".4" cy=".35" r=".7"><stop offset="0" stop-color="#fff"/><stop offset="1" stop-color="#b8d4f0"/></radialGradient></defs><path d="M10.809999999999999 10.61L14.5 14.8" stroke="#c89a3c" stroke-width="2.600" stroke-linecap="round"/><path d="M11.209999999999999 11.51L14.3 15.5" stroke="#7a5a1c" stroke-width=".7"/><circle cx="7.1" cy="6.9" r="5.3" fill="url(#glens)" stroke="#8e9aa8" stroke-width="1.300"/><rect x="4.100" y="6.100" width="5.800" height="1.800" fill="#2a3c6c"/></svg>
<div style="left:51px;top:79px;width:69px;height:21px;background:#fff;"></div>
<div style="left:107px;top:80px;width:12px;height:19px;background:#f2f2f2;"></div>
<div class="t" style="left:54px;top:82.2px;height:17px;line-height:17px;font-size:13.3px;color:#000;transform:scaleX(0.9415);">0.5032 x</div>
<svg class="a" style="left:109.5px;top:88px" width="6" height="3.5" viewBox="0 0 6 3.5" ><path d="M0 0h6l-3.0 3.500z" fill="#111"/></svg>
<svg class="a" style="left:124px;top:81px" width="18" height="17" viewBox="0 0 18 17" ><defs><linearGradient id="gdoc" x1="0" y1="0" x2="1" y2="1"><stop offset=".3" stop-color="#fff"/><stop offset="1" stop-color="#c9d6ee"/></linearGradient><linearGradient id="gdsk" x1="0" y1="0" x2="1" y2="1"><stop offset="0" stop-color="#8a8ee6"/><stop offset="1" stop-color="#34349a"/></linearGradient><linearGradient id="gfold" x1="0" y1="0" x2="0" y2="1"><stop offset="0" stop-color="#fbe59a"/><stop offset="1" stop-color="#eeb630"/></linearGradient><radialGradient id="glens" cx=".4" cy=".35" r=".7"><stop offset="0" stop-color="#fff"/><stop offset="1" stop-color="#b8d4f0"/></radialGradient></defs><path d="M10.5 10.5L14.5 14.5" stroke="#c89a3c" stroke-width="2.600" stroke-linecap="round"/><path d="M10.9 11.4L14.3 15.2" stroke="#7a5a1c" stroke-width=".7"/><circle cx="7" cy="7" r="5" fill="url(#glens)" stroke="#8e9aa8" stroke-width="1.300"/><path d="M4 7h6M7 4v6" stroke="#4a5c8c" stroke-width="2"/></svg>
<svg class="a" style="left:145px;top:83px" width="18" height="15" viewBox="0 0 18 15" ><path d="M2.400 1v12.400h12.500" stroke="#2255cc" stroke-width="1.300" fill="none"/><path d="M.8 3l1.600-2.300 1.600 2.300zM.8 11.800l1.600 2.600 1.600-2.600zM13 11.800l2.400 1.600-2.400 1.600zM4.300 11.800l-2.300 1.600 2.300 1.600z" fill="#2255cc"/><rect x="5.800" y="1.600" width="10.800" height="8" fill="#f4f8ff" stroke="#8a9ab8" stroke-width="1"/><path d="M16.400 1.500v8.200h-10.800" fill="none" stroke="#1c2c4c" stroke-width="1.400"/><path d="M8.400 3.400h5M8.400 3.400v4h3" fill="none" stroke="#8a8a96" stroke-width=".7"/><circle cx="8.400" cy="3.400" r="1.100" fill="#fff" stroke="#1a40c8" stroke-width="1"/><circle cx="13.400" cy="3.400" r="1.100" fill="#fff" stroke="#1a40c8" stroke-width="1"/><circle cx="11.400" cy="7.400" r="1.100" fill="#fff" stroke="#1a40c8" stroke-width="1"/></svg>
<svg class="a" style="left:169px;top:83px" width="15" height="13" viewBox="0 0 15 13" ><path d="M2 2l3 3M13 2l-3 3M2 11l3-3M13 11l-3-3" stroke="#b9b9b9" stroke-width="1" stroke-dasharray="1.300 .7"/><path d="M0 0h3.200l-3.200 3.200zM14.200 0h-3.200l3.200 3.200zM0 13h3.200l-3.200-3.200zM14.200 13h-3.200l3.200-3.200z" fill="#b9b9b9"/><rect x="4" y="5.600" width="2" height="2.200" fill="none" stroke="#b9b9b9" stroke-width=".9"/><rect x="8.800" y="5.600" width="2" height="2.200" fill="none" stroke="#b9b9b9" stroke-width=".9"/><path d="M6 6.700h2.800" stroke="#b9b9b9" stroke-width=".9"/></svg>
<div style="left:189px;top:82px;width:1px;height:15px;background:#b4b4b4;"></div>
<svg class="a" style="left:196px;top:80px" width="17" height="18" viewBox="0 0 17 18" ><defs><linearGradient id="gdoc" x1="0" y1="0" x2="1" y2="1"><stop offset=".3" stop-color="#fff"/><stop offset="1" stop-color="#c9d6ee"/></linearGradient><linearGradient id="gdsk" x1="0" y1="0" x2="1" y2="1"><stop offset="0" stop-color="#8a8ee6"/><stop offset="1" stop-color="#34349a"/></linearGradient><linearGradient id="gfold" x1="0" y1="0" x2="0" y2="1"><stop offset="0" stop-color="#fbe59a"/><stop offset="1" stop-color="#eeb630"/></linearGradient><radialGradient id="glens" cx=".4" cy=".35" r=".7"><stop offset="0" stop-color="#fff"/><stop offset="1" stop-color="#b8d4f0"/></radialGradient></defs><path d="M10.16 11.66L13.5 15.5" stroke="#c89a3c" stroke-width="2.600" stroke-linecap="round"/><path d="M10.56 12.56L13.3 16.2" stroke="#7a5a1c" stroke-width=".7"/><circle cx="7.5" cy="9" r="3.8" fill="url(#glens)" stroke="#8e9aa8" stroke-width="1.300"/><path d="M3.500 4.500c2-3 6-3 8 0" fill="none" stroke="#2a5ac8" stroke-width="1.300"/><path d="M1.500 1.500l.5 4.500 4-1.500z" fill="#2a5ac8"/></svg>
<svg class="a" style="left:220px;top:82px" width="13" height="14" viewBox="0 0 13 14" ><path d="M2.500 5.500c.5-2.500 5-3.500 7-1" fill="none" stroke="#2a5ac8" stroke-width="1.400"/><path d="M11.500 1v4.500h-4.500z" fill="#2a5ac8"/><path d="M10.500 8.500c-.5 2.500-5 3.500-7 1" fill="none" stroke="#2a5ac8" stroke-width="1.400"/><path d="M1.500 13v-4.500h4.500z" fill="#2a5ac8"/></svg>
<svg class="a" style="left:666px;top:82px" width="6" height="14" viewBox="0 0 6 14" ><rect x="2" y="1.500" width="2.500" height="2.500" fill="#fff" stroke="#2a55c8" stroke-width=".9"/><path d="M3.500 5.500v7" stroke="#222" stroke-dasharray="1 1.200"/></svg>
<div style="left:675px;top:78px;width:22px;height:22px;background:#dae7f3;border:1.500px solid #0a7ad8;box-sizing:border-box;border-radius:1px;"></div>
<svg class="a" style="left:679px;top:82px" width="15" height="14" viewBox="0 0 15 14" ><path d="M1.500 2.500h8" stroke="#222" stroke-dasharray="1 1"/><rect x="10.300" y="1.300" width="2.500" height="2.500" fill="#fff" stroke="#2a55c8" stroke-width=".9"/><path d="M11.500 5.500v7" stroke="#222" stroke-dasharray="1 1.200"/></svg>
<svg class="a" style="left:700px;top:82px" width="16" height="15" viewBox="0 0 16 15" ><path d="M1.500 12.500h12" stroke="#2a5ac8" stroke-width="1.200"/><path d="M12 10.500l3 2-3 2z" fill="#2a5ac8"/><path d="M1.500 12.500l9.500-10" stroke="#444" stroke-width="1"/><rect x="10.300" y=".8" width="2.500" height="2.500" fill="#fff" stroke="#2a55c8" stroke-width=".9"/><path d="M7 8.500c1 1 1.500 2.500 1.500 4" fill="none" stroke="#444" stroke-dasharray="1 1" stroke-width=".9"/></svg>
<div style="left:721px;top:82px;width:1px;height:15px;background:#b4b4b4;"></div>
<div style="left:726px;top:79px;width:48px;height:21px;background:#fff;"></div>
<div style="left:761px;top:80px;width:12px;height:19px;background:#f2f2f2;"></div>
<div class="t" style="left:728.5px;top:82.4px;height:17px;line-height:17px;font-size:13.3px;color:#000;transform:scaleX(0.9388);">mm</div>
<svg class="a" style="left:763.2px;top:88px" width="6" height="3.5" viewBox="0 0 6 3.5" ><path d="M0 0h6l-3.0 3.500z" fill="#111"/></svg>
<svg class="a" style="left:779px;top:82px" width="14" height="15" viewBox="0 0 14 15" ><path d="M1.500 3h6" stroke="#2a5ac8" stroke-width="1.200"/><path d="M0 3l2.500-2v4zM8.500 3l-2.500-2v4z" fill="#2a5ac8"/><text x="8.500" y="7" font-family="Liberation Sans" font-size="7.500" font-weight="bold" fill="#111">0</text><rect x="6.500" y="5" width="1.500" height="1.500" fill="#111"/><text x="2.500" y="14" font-family="Liberation Sans" font-size="7.500" font-weight="bold" fill="#111">00</text><rect x=".5" y="12.300" width="1.500" height="1.500" fill="#111"/></svg>
<svg class="a" style="left:800px;top:88px" width="5.5" height="3.5" viewBox="0 0 5.5 3.5" ><path d="M0 0h5.5l-2.75 3.500z" fill="#222"/></svg>
<div style="left:810px;top:82px;width:1px;height:15px;background:#b4b4b4;"></div>
<svg class="a" style="left:818px;top:82px" width="15" height="15" viewBox="0 0 15 15" ><rect x="0.0" y="0.0" width="1" height="1" fill="#333"/><rect x="2.4" y="0.0" width="1" height="1" fill="#333"/><rect x="4.8" y="0.0" width="1" height="1" fill="#333"/><rect x="7.2" y="0.0" width="1" height="1" fill="#333"/><rect x="9.6" y="0.0" width="1" height="1" fill="#333"/><rect x="12.0" y="0.0" width="1" height="1" fill="#333"/><rect x="0.0" y="2.3" width="1" height="1" fill="#333"/><rect x="2.4" y="2.3" width="1" height="1" fill="#333"/><rect x="4.8" y="2.3" width="1" height="1" fill="#333"/><rect x="7.2" y="2.3" width="1" height="1" fill="#333"/><rect x="9.6" y="2.3" width="1" height="1" fill="#333"/><rect x="12.0" y="2.3" width="1" height="1" fill="#333"/><rect x="0.0" y="4.6" width="1" height="1" fill="#333"/><rect x="2.4" y="4.6" width="1" height="1" fill="#333"/><rect x="4.8" y="4.6" width="1" height="1" fill="#333"/><rect x="7.2" y="4.6" width="1" height="1" fill="#333"/><rect x="9.6" y="4.6" width="1" height="1" fill="#333"/><rect x="12.0" y="4.6" width="1" height="1" fill="#333"/><rect x="0.0" y="6.9" width="1" height="1" fill="#333"/><rect x="2.4" y="6.9" width="1" height="1" fill="#333"/><rect x="4.8" y="6.9" width="1" height="1" fill="#333"/><rect x="7.2" y="6.9" width="1" height="1" fill="#333"/><rect x="9.6" y="6.9" width="1" height="1" fill="#333"/><rect x="12.0" y="6.9" width="1" height="1" fill="#333"/><rect x="0.0" y="9.2" width="1" height="1" fill="#333"/><rect x="2.4" y="9.2" width="1" height="1" fill="#333"/><rect x="4.8" y="9.2" width="1" height="1" fill="#333"/><rect x="7.2" y="9.2" width="1" height="1" fill="#333"/><rect x="9.6" y="9.2" width="1" height="1" fill="#333"/><rect x="12.0" y="9.2" width="1" height="1" fill="#333"/><rect x="0.0" y="11.5" width="1" height="1" fill="#333"/><rect x="2.4" y="11.5" width="1" height="1" fill="#333"/><rect x="4.8" y="11.5" width="1" height="1" fill="#333"/><rect x="7.2" y="11.5" width="1" height="1" fill="#333"/><rect x="9.6" y="11.5" width="1" height="1" fill="#333"/><rect x="12.0" y="11.5" width="1" height="1" fill="#333"/><rect x="0.0" y="13.8" width="1" height="1" fill="#333"/><rect x="2.4" y="13.8" width="1" height="1" fill="#333"/><rect x="4.8" y="13.8" width="1" height="1" fill="#333"/><rect x="7.2" y="13.8" width="1" height="1" fill="#333"/><rect x="9.6" y="13.8" width="1" height="1" fill="#333"/><rect x="12.0" y="13.8" width="1" height="1" fill="#333"/></svg>
<div style="left:837px;top:78px;width:79px;height:23px;background:#efefef;border:1px solid #adadad;box-sizing:border-box;"></div>
<div class="t" style="left:841.3px;top:82.3px;height:17px;line-height:17px;font-size:13.3px;color:#6d6d6d;transform:scaleX(0.9328);">1 mm</div>
<svg class="a" style="left:904.6px;top:88px" width="5.5" height="3.5" viewBox="0 0 5.5 3.5" ><path d="M0 0h5.5l-2.75 3.500z" fill="#b8b8b8"/></svg>
<svg class="a" style="left:919px;top:82px" width="16" height="16" viewBox="0 0 16 16" ><rect x="0.0" y="0.0" width="1" height="1" fill="#333"/><rect x="2.4" y="0.0" width="1" height="1" fill="#333"/><rect x="4.8" y="0.0" width="1" height="1" fill="#333"/><rect x="7.2" y="0.0" width="1" height="1" fill="#333"/><rect x="9.6" y="0.0" width="1" height="1" fill="#333"/><rect x="12.0" y="0.0" width="1" height="1" fill="#333"/><rect x="0.0" y="2.3" width="1" height="1" fill="#333"/><rect x="2.4" y="2.3" width="1" height="1" fill="#333"/><rect x="4.8" y="2.3" width="1" height="1" fill="#333"/><rect x="7.2" y="2.3" width="1" height="1" fill="#333"/><rect x="9.6" y="2.3" width="1" height="1" fill="#333"/><rect x="12.0" y="2.3" width="1" height="1" fill="#333"/><rect x="0.0" y="4.6" width="1" height="1" fill="#333"/><rect x="2.4" y="4.6" width="1" height="1" fill="#333"/><rect x="4.8" y="4.6" width="1" height="1" fill="#333"/><rect x="7.2" y="4.6" width="1" height="1" fill="#333"/><rect x="9.6" y="4.6" width="1" height="1" fill="#333"/><rect x="12.0" y="4.6" width="1" height="1" fill="#333"/><rect x="0.0" y="6.9" width="1" height="1" fill="#333"/><rect x="2.4" y="6.9" width="1" height="1" fill="#333"/><rect x="4.8" y="6.9" width="1" height="1" fill="#333"/><rect x="7.2" y="6.9" width="1" height="1" fill="#333"/><rect x="9.6" y="6.9" width="1" height="1" fill="#333"/><rect x="12.0" y="6.9" width="1" height="1" fill="#333"/><rect x="0.0" y="9.2" width="1" height="1" fill="#333"/><rect x="2.4" y="9.2" width="1" height="1" fill="#333"/><rect x="4.8" y="9.2" width="1" height="1" fill="#333"/><rect x="7.2" y="9.2" width="1" height="1" fill="#333"/><rect x="9.6" y="9.2" width="1" height="1" fill="#333"/><rect x="12.0" y="9.2" width="1" height="1" fill="#333"/><rect x="0.0" y="11.5" width="1" height="1" fill="#333"/><rect x="2.4" y="11.5" width="1" height="1" fill="#333"/><rect x="4.8" y="11.5" width="1" height="1" fill="#333"/><rect x="7.2" y="11.5" width="1" height="1" fill="#333"/><rect x="9.6" y="11.5" width="1" height="1" fill="#333"/><rect x="12.0" y="11.5" width="1" height="1" fill="#333"/><path d="M6.500 2.500v11l2.500-2.500 2 4.500 1.500-.7-2-4.300h3.500z" fill="#fff" stroke="#222" stroke-width=".9"/></svg>
<div style="left:939px;top:78px;width:79px;height:23px;background:#efefef;border:1px solid #adadad;box-sizing:border-box;"></div>
<div class="t" style="left:943.1px;top:82.3px;height:17px;line-height:17px;font-size:13.3px;color:#6d6d6d;transform:scaleX(0.9328);">1 mm</div>
<svg class="a" style="left:1006px;top:88px" width="5.5" height="3.5" viewBox="0 0 5.5 3.5" ><path d="M0 0h5.5l-2.75 3.500z" fill="#b8b8b8"/></svg>
<div style="left:1020px;top:82px;width:1px;height:15px;background:#b4b4b4;"></div>
<svg class="a" style="left:1026px;top:81px" width="17" height="17" viewBox="0 0 17 17" ><path d="M2 2.500h12" stroke="#444"/><rect x=".8" y="1.300" width="2.500" height="2.500" fill="#fff" stroke="#2a55c8" stroke-width=".9"/><rect x="12.800" y="1.300" width="2.500" height="2.500" fill="#fff" stroke="#2a55c8" stroke-width=".9"/><path d="M2 14.500h12" stroke="#777"/><rect x=".8" y="13.300" width="2.500" height="2.500" fill="#fff" stroke="#777" stroke-width=".9"/><rect x="12.800" y="13.300" width="2.500" height="2.500" fill="#fff" stroke="#777" stroke-width=".9"/><path d="M8 12v-6M5.500 8.500l2.500-3 2.500 3" fill="none" stroke="#2a55c8" stroke-width="1.200"/></svg>
<svg class="a" style="left:1048.9px;top:87.5px" width="5.5" height="3.5" viewBox="0 0 5.5 3.5" ><path d="M0 0h5.5l-2.75 3.500z" fill="#222"/></svg>
<div style="left:1058.5px;top:77px;width:11px;height:26px;background:linear-gradient(#f0f0f0 0%,#e2e2e2 35%,#a8a8a8 75%,#8c8c8c);border-radius:0 3px 3px 0;"></div><svg class="a" style="left:1061.5px;top:94px" width="7" height="7" viewBox="0 0 7 7" ><path d="M0 0.500h6" stroke="#000" stroke-width="1"/><path d="M0 2.500h6l-3 3.500z" fill="#000"/><path d="M1.500 3h6l-3 3.500z" fill="#fff" opacity=".0"/></svg>
<!-- icons2 -->
<svg class="a" style="left:0px;top:116px" width="32" height="300" viewBox="0 0 32 300" ><path d="M9 3l11.500 11.500" stroke="#111" stroke-width="1.400"/><path d="M9.500 35.500v-5.500l3.500-4.500h7.500l-2 4 3 2.500v2l-1.500 1.500z" fill="#fff" stroke="#111" stroke-width="1.100"/><path d="M9.500 57.500v-5.500l3.500-4.500h7.500l-2 4 3 2.500v2l-1.500 1.500z" fill="#8a8a8a" stroke="#111" stroke-width="1.100"/><rect x="9.500" y="69.500" width="11.500" height="10.500" fill="#8c8c8c" stroke="#111" stroke-width="1.200"/><circle cx="15" cy="97" r="5.500" fill="#cfcfcf" stroke="#b4b4b4"/><circle cx="15" cy="97" r="2.200" fill="#fff" stroke="#b4b4b4" stroke-width=".8"/><circle cx="9" cy="119" r="5.700" fill="#8a8a8a" stroke="#111" stroke-width="1.200"/><path d="M3.500 131.500c5 0 10 4 11 12" fill="none" stroke="#c0c0c0" stroke-width="1"/><path d="M9 134l4 4M13 134l-4 4" stroke="#c0c0c0" stroke-width=".9"/><text x="3.500" y="169.500" font-family="Liberation Serif" font-weight="bold" font-size="16" fill="#2a5ac8">A</text><path d="M1 263.500h14" stroke="#2a5ac8" stroke-width="1.200"/><path d="M1 263.500l10-9" stroke="#2a5ac8" stroke-width="1"/><path d="M7 258.500c1 1.500 1.500 3 1.500 5" fill="none" stroke="#555" stroke-dasharray="1 1" stroke-width=".8"/><text x="5.500" y="257" font-family="Liberation Sans" font-weight="bold" font-size="7.500" fill="#1a2a5a">45</text><circle cx="15" cy="252" r="1.100" fill="none" stroke="#1a2a5a" stroke-width=".7"/><path d="M13.500 273v12l3-2.500 2 4 1.500-.800-2-4h3.500z" fill="#fff" stroke="#8a98b0" stroke-width=".9"/><path d="M8 284.500h6.500M11.300 281.500v6.500" stroke="#2a5ac8" stroke-width="2.200"/><rect x="8.500" y="221.500" width="13" height="15" fill="#f2f2f2" stroke="#c4c4c4"/><path d="M13 224v6M10 227h6M17.500 223v4M15.500 225h4M15.500 229v5M13 231.500h5" stroke="#c0c0c0" stroke-width=".8"/></svg>
<svg class="a" style="left:24.5px;top:232.5px" width="3" height="5" viewBox="0 0 3 5" ><path d="M0 0l2.800 2.500-2.800 2.500z" fill="#111"/></svg>
<svg class="a" style="left:24.5px;top:254.5px" width="3" height="5" viewBox="0 0 3 5" ><path d="M0 0l2.800 2.500-2.800 2.500z" fill="#c4c4c4"/></svg>
<svg class="a" style="left:24.5px;top:276.5px" width="3" height="5" viewBox="0 0 3 5" ><path d="M0 0l2.800 2.500-2.800 2.500z" fill="#111"/></svg>
<svg class="a" style="left:24.5px;top:369.5px" width="3" height="5" viewBox="0 0 3 5" ><path d="M0 0l2.800 2.500-2.800 2.500z" fill="#111"/></svg>
<svg class="a" style="left:8px;top:294px" width="14" height="14" viewBox="0 0 14 14" shape-rendering="crispEdges"><rect width="14" height="13.500" fill="#fff"/><rect x="0" y="0.0" width="2" height="2" fill="#000"/><rect x="4" y="0.0" width="2" height="2" fill="#000"/><rect x="8" y="0.0" width="2" height="2" fill="#000"/><rect x="12" y="0.0" width="2" height="2" fill="#000"/><rect x="0" y="1.9" width="2" height="2" fill="#000"/><rect x="8" y="1.9" width="2" height="2" fill="#000"/><rect x="10" y="1.9" width="2" height="2" fill="#000"/><rect x="0" y="3.8" width="2" height="2" fill="#000"/><rect x="4" y="3.8" width="2" height="2" fill="#000"/><rect x="6" y="3.8" width="2" height="2" fill="#000"/><rect x="12" y="3.8" width="2" height="2" fill="#000"/><rect x="0" y="5.7" width="2" height="2" fill="#000"/><rect x="10" y="5.7" width="2" height="2" fill="#000"/><rect x="0" y="7.6" width="2" height="2" fill="#000"/><rect x="4" y="7.6" width="2" height="2" fill="#000"/><rect x="8" y="7.6" width="2" height="2" fill="#000"/><rect x="0" y="9.5" width="2" height="2" fill="#000"/><rect x="6" y="9.5" width="2" height="2" fill="#000"/><rect x="10" y="9.5" width="2" height="2" fill="#000"/><rect x="12" y="9.5" width="2" height="2" fill="#000"/><rect x="0" y="11.4" width="2" height="2" fill="#000"/><rect x="2" y="11.4" width="2" height="2" fill="#000"/><rect x="4" y="11.4" width="2" height="2" fill="#000"/><rect x="6" y="11.4" width="2" height="2" fill="#000"/><rect x="8" y="11.4" width="2" height="2" fill="#000"/><rect x="10" y="11.4" width="2" height="2" fill="#000"/><rect x="12" y="11.4" width="2" height="2" fill="#000"/></svg>
<svg class="a" style="left:7px;top:315px" width="16" height="16" viewBox="0 0 16 16" ><rect width="16" height="16" fill="#fff"/><rect x="0.6" y="0.6" width="4" height="4" fill="#fff" stroke="#000" stroke-width="1.200"/><rect x="2" y="2" width="1.300" height="1.300" fill="#000"/><rect x="11.1" y="0.6" width="4" height="4" fill="#fff" stroke="#000" stroke-width="1.200"/><rect x="12.5" y="2" width="1.300" height="1.300" fill="#000"/><rect x="0.6" y="11.1" width="4" height="4" fill="#fff" stroke="#000" stroke-width="1.200"/><rect x="2" y="12.5" width="1.300" height="1.300" fill="#000"/><rect x="5.80" y="2.90" width="1.500" height="1.500" fill="#000"/><rect x="7.25" y="2.90" width="1.500" height="1.500" fill="#000"/><rect x="8.70" y="4.35" width="1.500" height="1.500" fill="#000"/><rect x="0.00" y="5.80" width="1.500" height="1.500" fill="#000"/><rect x="1.45" y="5.80" width="1.500" height="1.500" fill="#000"/><rect x="5.80" y="5.80" width="1.500" height="1.500" fill="#000"/><rect x="7.25" y="5.80" width="1.500" height="1.500" fill="#000"/><rect x="8.70" y="5.80" width="1.500" height="1.500" fill="#000"/><rect x="13.05" y="5.80" width="1.500" height="1.500" fill="#000"/><rect x="0.00" y="7.25" width="1.500" height="1.500" fill="#000"/><rect x="2.90" y="7.25" width="1.500" height="1.500" fill="#000"/><rect x="4.35" y="7.25" width="1.500" height="1.500" fill="#000"/><rect x="7.25" y="7.25" width="1.500" height="1.500" fill="#000"/><rect x="8.70" y="7.25" width="1.500" height="1.500" fill="#000"/><rect x="13.05" y="7.25" width="1.500" height="1.500" fill="#000"/><rect x="2.90" y="8.70" width="1.500" height="1.500" fill="#000"/><rect x="10.15" y="8.70" width="1.500" height="1.500" fill="#000"/><rect x="11.60" y="8.70" width="1.500" height="1.500" fill="#000"/><rect x="13.05" y="8.70" width="1.500" height="1.500" fill="#000"/><rect x="14.50" y="8.70" width="1.500" height="1.500" fill="#000"/><rect x="5.80" y="10.15" width="1.500" height="1.500" fill="#000"/><rect x="7.25" y="10.15" width="1.500" height="1.500" fill="#000"/><rect x="10.15" y="10.15" width="1.500" height="1.500" fill="#000"/><rect x="13.05" y="10.15" width="1.500" height="1.500" fill="#000"/><rect x="14.50" y="10.15" width="1.500" height="1.500" fill="#000"/><rect x="7.25" y="11.60" width="1.500" height="1.500" fill="#000"/><rect x="8.70" y="11.60" width="1.500" height="1.500" fill="#000"/><rect x="10.15" y="11.60" width="1.500" height="1.500" fill="#000"/><rect x="13.05" y="11.60" width="1.500" height="1.500" fill="#000"/><rect x="5.80" y="13.05" width="1.500" height="1.500" fill="#000"/><rect x="10.15" y="13.05" width="1.500" height="1.500" fill="#000"/><rect x="13.05" y="13.05" width="1.500" height="1.500" fill="#000"/><rect x="5.80" y="14.50" width="1.500" height="1.500" fill="#000"/><rect x="7.25" y="14.50" width="1.500" height="1.500" fill="#000"/><rect x="8.70" y="14.50" width="1.500" height="1.500" fill="#000"/><rect x="11.60" y="14.50" width="1.500" height="1.500" fill="#000"/></svg>
<svg class="a" style="left:107px;top:130px" width="17" height="18" viewBox="0 0 17 18" ><rect x="1.500" y="2.500" width="11" height="13" fill="#fff" stroke="#7a3a1a" stroke-width="1.300"/><rect x="4.500" y="1" width="5" height="2.500" fill="#e8e0d8" stroke="#7a3a1a" stroke-width=".8"/><path d="M3.500 7l1 1 1.500-2M3.500 11l1 1 1.500-2" fill="none" stroke="#2a55c8" stroke-width="1"/><path d="M7.500 7.500h3M7.500 11.500h2" stroke="#556" stroke-width=".9"/><path d="M12.500 10.500v6M9.500 13.500h6" stroke="#2a8a1c" stroke-width="3"/><path d="M12.500 11.300v4.400M10.300 13.500h4.400" stroke="#6cd04a" stroke-width="1.400"/></svg>
<svg class="a" style="left:137px;top:130px" width="13" height="17" viewBox="0 0 13 17" ><rect x=".5" y="2.500" width="11" height="13" fill="#f2f2f2" stroke="#c0c0c0"/><rect x="3.500" y="1" width="5" height="2.500" fill="#eee" stroke="#c0c0c0" stroke-width=".8"/><path d="M2.500 7l1 1 1.500-2M2.500 11l1 1 1.500-2M6.500 7.500h3M6.500 11.500h3" fill="none" stroke="#c0c0c0" stroke-width=".9"/></svg>
<svg class="a" style="left:159px;top:132px" width="13" height="14" viewBox="0 0 13 14" ><path d="M.5 .5l11.500 6.300-11.500 6.200 2.500-6.200z" fill="#c0c0c0"/></svg>
<svg class="a" style="left:186px;top:133px" width="14" height="13" viewBox="0 0 14 13" ><path d="M1 1l12 11M13 1l-12 11" stroke="#c0c0c0" stroke-width="1.400"/></svg>
<svg class="a" style="left:216px;top:134px" width="10" height="10" viewBox="0 0 10 10" ><path d="M5 .5l4.500 4.500h-2.500v4.500h-4v-4.500h-2.500z" fill="#d2d2d2"/></svg>
<svg class="a" style="left:40px;top:647px" width="18" height="17" viewBox="0 0 18 17" ><path d="M1.500 1.500h7l3 3v9.500h-10z" fill="#fff" stroke="#556"/><path d="M8.500 1.500v3h3" fill="none" stroke="#556" stroke-width=".8"/><path d="M3 6.500h6M3 8.500h6M3 10.500h4" stroke="#8a96b0" stroke-width=".9"/><path d="M12.500 9.500v6M9.500 12.500h6" stroke="#2a8a1c" stroke-width="3"/><path d="M12.500 10.300v4.400M10.300 12.500h4.400" stroke="#6cd04a" stroke-width="1.400"/></svg>
<svg class="a" style="left:63px;top:647px" width="16" height="16" viewBox="0 0 16 16" ><path d="M2.700 2.800l10.400 10.400M13.100 2.800l-10.400 10.400" stroke="#c4c4c4" stroke-width="3.400" stroke-linecap="round"/></svg>
<svg class="a" style="left:50px;top:594px" width="16" height="16" viewBox="0 0 16 16" ><rect x="6.5" y="0.5" width="6.500" height="6.500" fill="#f4f7ff" stroke="#55607a" stroke-width=".9"/><path d="M8 2.5h1.200M10.5 2.5h1.200M8 4.5h1.200M10.5 4.5h1.200" stroke="#4a66c0" stroke-width=".8"/><rect x="3.5" y="3.5" width="6.500" height="6.500" fill="#f4f7ff" stroke="#55607a" stroke-width=".9"/><path d="M5 5.5h1.200M7.5 5.5h1.200M5 7.5h1.200M7.5 7.5h1.200" stroke="#4a66c0" stroke-width=".8"/><rect x="0.5" y="6.5" width="6.500" height="6.500" fill="#f4f7ff" stroke="#55607a" stroke-width=".9"/><path d="M2 8.5h1.200M4.5 8.5h1.200M2 10.5h1.200M4.5 10.5h1.200" stroke="#4a66c0" stroke-width=".8"/></svg>
<svg class="a" style="left:115px;top:594px" width="16" height="16" viewBox="0 0 16 16" ><circle cx="8" cy="7.800" r="6.500" fill="none" stroke="#8a8cc4" stroke-width="2" stroke-dasharray="2.600 2.500"/><circle cx="8" cy="7.800" r="4.600" fill="none" stroke="#8e90c8" stroke-width="3"/><circle cx="8" cy="7.800" r="3" fill="#e8ecf8" stroke="#a4a6d2" stroke-width=".6"/></svg>
<svg class="a" style="left:176px;top:593px" width="14" height="17" viewBox="0 0 14 17" ><rect x="1.500" y="2.500" width="10" height="13" fill="#fff" stroke="#7a3a1a" stroke-width="1.200"/><rect x="4" y="1" width="5" height="2.500" fill="#e8e0d8" stroke="#7a3a1a" stroke-width=".8"/><path d="M3 7l1 1 1.500-2M3 11l1 1 1.500-2" fill="none" stroke="#2a55c8" stroke-width="1"/><path d="M7 7.500h3M7 11.500h3" stroke="#556" stroke-width=".9"/></svg>
<!-- dialog -->
<div style="left:240px;top:77px;width:426px;height:543px;background:#f0f0f0;border-radius:8px;box-shadow:0 0 0 1px rgba(80,80,80,.38),0 5px 26px 2px rgba(0,0,0,.36),0 1px 6px rgba(0,0,0,.16);"></div>
<div style="left:240px;top:77px;width:426px;height:30px;background:#f3f3f3;border-radius:8px 8px 0 0;"></div>
<svg class="a" style="left:247.5px;top:82.7px" width="17" height="16" viewBox="0 0 17 16"><rect x="0" y="0" width="17" height="16" fill="#fbfbfb"/><rect x="12.300" y="0.1" width="4" height="2.300" rx=".5" fill="#000"/><rect x=".8" y="0.3" width="2" height="1.900" rx=".6" fill="#111"/><rect x="12.300" y="3.1" width="4" height="2.300" rx=".5" fill="#000"/><rect x=".8" y="3.3" width="2" height="1.900" rx=".6" fill="#111"/><rect x="12.300" y="6.3" width="4" height="2.300" rx=".5" fill="#000"/><rect x=".8" y="6.5" width="2" height="1.900" rx=".6" fill="#111"/><rect x="12.300" y="9.3" width="4" height="2.300" rx=".5" fill="#000"/><rect x=".8" y="9.5" width="2" height="1.900" rx=".6" fill="#111"/><rect x="12.300" y="12.5" width="4" height="2.300" rx=".5" fill="#000"/><rect x=".8" y="12.7" width="2" height="1.900" rx=".6" fill="#111"/><path d="M8.500 1.300h4M9 4.300h3.500M11 10.400h1.500M10 13.300l1.500-.8h1M2.500 1l1.500 1.500M5 14.500q2 1.800 4.500 .5" fill="none" stroke="#8a8a8a" stroke-width=".6"/><circle cx="6.3" cy="1.3" r="0.9" fill="#0a8a96"/><circle cx="7.6" cy="1.6" r="0.8" fill="#111"/><circle cx="6.6" cy="2.8" r="0.9" fill="#ff1010"/><circle cx="5.3" cy="2.6" r="0.9" fill="#f4f000"/><circle cx="4.6" cy="4.5" r="1" fill="#f4f000"/><circle cx="2.8" cy="5.4" r="0.7" fill="#8a8a10"/><circle cx="3.7" cy="6.7" r="0.9" fill="#ff1010"/><circle cx="7.2" cy="4.6" r="1" fill="#111"/><circle cx="7.6" cy="5.7" r="0.8" fill="#111"/><circle cx="7.2" cy="7.6" r="0.8" fill="#111"/><circle cx="9.3" cy="7.6" r="0.8" fill="#111"/><circle cx="10.3" cy="7.6" r="0.8" fill="#a00"/><circle cx="7.2" cy="10.6" r="0.8" fill="#111"/><circle cx="8.3" cy="10.5" r="0.8" fill="#8a0aa0"/><circle cx="9.3" cy="10.6" r="0.8" fill="#c01010"/><circle cx="8.8" cy="11.9" r="1.1" fill="#f4f000"/><circle cx="4" cy="10.8" r="1" fill="#111"/><circle cx="5" cy="10.8" r="0.8" fill="#111"/><circle cx="4.4" cy="12.7" r="0.8" fill="#a00"/><circle cx="4.4" cy="13.8" r="0.9" fill="#111"/><circle cx="7.3" cy="13.7" r="0.9" fill="#111"/><path d="M6 6q-1 3 1 6" fill="none" stroke="#9a9a9a" stroke-width=".9"/></svg>
<div class="t" style="left:270px;top:83.5px;height:16px;line-height:16px;font-size:12px;color:#8b8b8b;transform:scaleX(0.9781);">Script</div>
<svg class="a" style="left:644px;top:84px" width="14" height="14" viewBox="0 0 14 14" fill="none" stroke="#4a4a4a" stroke-width="1"><path d="M2 2.5l10 10M12 2.5l-10 10"/></svg>
<div class="t" style="left:253.3px;top:123.5px;height:16px;line-height:16px;font-size:12px;color:#000;transform:scaleX(0.8686);">Name:</div>
<div style="left:331px;top:121.5px;width:321px;height:21px;background:#f0f0f0;border:1px solid #fbfbfb;border-bottom:1px solid #8a8a8a;border-radius:3px;box-sizing:border-box;"></div>
<div class="t" style="left:333.2px;top:122.5px;height:15px;line-height:15px;font-size:11.5px;color:#000;transform:scaleX(0.9317);">Solar_AutoDraw</div>
<div style="left:254px;top:153px;width:399px;height:320px;background:#fff;border:1px solid #a0a0a0;box-sizing:border-box;"></div>
<div style="left:268px;top:154px;width:384px;height:20px;background:#f0f0f0;"></div>
<div style="left:255px;top:154px;width:13px;height:293px;background:linear-gradient(#fff,#fff 40%,#f4f4f4);"></div>
<div style="left:255px;top:447px;width:397px;height:1px;background:#a0a0a0;"></div>
<div style="left:256px;top:158px;width:11px;height:11px;border:1px solid #8ea6c6;border-radius:2px;box-sizing:border-box;background:linear-gradient(#fdfeff,#d6e2f2);"></div>
<div style="left:259px;top:163px;width:5px;height:1px;background:#3a4a66;"></div>
<div class="t" style="left:272.5px;top:155.5px;height:16px;line-height:16px;font-size:12.6px;color:#000;font-weight:bold;transform:scaleX(0.9999);">Parameters</div>
<div style="left:268px;top:174px;width:384px;height:1px;background:#a6a6a6;"></div>
<div class="t" style="left:273.3px;top:177.3px;height:16px;line-height:16px;font-size:12.6px;color:#000;transform:scaleX(0.8983);">PAR_Scan</div>
<div class="t" style="left:460.2px;top:176.3px;height:16px;line-height:16px;font-size:12.6px;color:#000;transform:scaleX(0.9664);">scan</div>
<div style="left:636px;top:176px;width:15px;height:18px;background:linear-gradient(#e6effd,#c4d6f4 50%,#a2bde9);"></div>
<div style="left:638px;top:190px;width:2px;height:2px;background:#161616;"></div>
<div style="left:642px;top:190px;width:2px;height:2px;background:#161616;"></div>
<div style="left:646px;top:190px;width:2px;height:2px;background:#161616;"></div>
<div style="left:268px;top:195px;width:384px;height:1px;background:#d4d4d4;"></div>
<div class="t" style="left:273.3px;top:198.3px;height:16px;line-height:16px;font-size:12.6px;color:#000;transform:scaleX(0.9098);">PAR_jb</div>
<div class="t" style="left:460.2px;top:197.3px;height:16px;line-height:16px;font-size:12.6px;color:#000;transform:scaleX(1.0718);">jb</div>
<div style="left:636px;top:197px;width:15px;height:18px;background:linear-gradient(#e6effd,#c4d6f4 50%,#a2bde9);"></div>
<div style="left:638px;top:211px;width:2px;height:2px;background:#161616;"></div>
<div style="left:642px;top:211px;width:2px;height:2px;background:#161616;"></div>
<div style="left:646px;top:211px;width:2px;height:2px;background:#161616;"></div>
<div style="left:268px;top:216px;width:384px;height:1px;background:#d4d4d4;"></div>
<div class="t" style="left:273.3px;top:219.3px;height:16px;line-height:16px;font-size:12.6px;color:#000;transform:scaleX(0.8819);">PAR_yc</div>
<div class="t" style="left:460.2px;top:218.3px;height:16px;line-height:16px;font-size:12.6px;color:#000;transform:scaleX(0.9370);">yc</div>
<div style="left:636px;top:218px;width:15px;height:18px;background:linear-gradient(#e6effd,#c4d6f4 50%,#a2bde9);"></div>
<div style="left:638px;top:232px;width:2px;height:2px;background:#161616;"></div>
<div style="left:642px;top:232px;width:2px;height:2px;background:#161616;"></div>
<div style="left:646px;top:232px;width:2px;height:2px;background:#161616;"></div>
<div style="left:268px;top:237px;width:384px;height:1px;background:#d4d4d4;"></div>
<div class="t" style="left:273.3px;top:240.3px;height:16px;line-height:16px;font-size:12.6px;color:#000;transform:scaleX(0.8752);">PAR_xs</div>
<div class="t" style="left:460.2px;top:239.3px;height:16px;line-height:16px;font-size:12.6px;color:#000;transform:scaleX(0.8973);">xs</div>
<div style="left:636px;top:239px;width:15px;height:18px;background:linear-gradient(#e6effd,#c4d6f4 50%,#a2bde9);"></div>
<div style="left:638px;top:253px;width:2px;height:2px;background:#161616;"></div>
<div style="left:642px;top:253px;width:2px;height:2px;background:#161616;"></div>
<div style="left:646px;top:253px;width:2px;height:2px;background:#161616;"></div>
<div style="left:268px;top:258px;width:384px;height:1px;background:#d4d4d4;"></div>
<div class="t" style="left:273.3px;top:261.3px;height:16px;line-height:16px;font-size:12.6px;color:#000;transform:scaleX(0.9323);">PAR_bk</div>
<div class="t" style="left:460.2px;top:260.3px;height:16px;line-height:16px;font-size:12.6px;color:#000;transform:scaleX(1.0718);">bkx</div>
<div style="left:636px;top:260px;width:15px;height:18px;background:linear-gradient(#e6effd,#c4d6f4 50%,#a2bde9);"></div>
<div style="left:638px;top:274px;width:2px;height:2px;background:#161616;"></div>
<div style="left:642px;top:274px;width:2px;height:2px;background:#161616;"></div>
<div style="left:646px;top:274px;width:2px;height:2px;background:#161616;"></div>
<div style="left:268px;top:279px;width:384px;height:1px;background:#d4d4d4;"></div>
<div class="t" style="left:273.3px;top:282.3px;height:16px;line-height:16px;font-size:12.6px;color:#000;transform:scaleX(0.9677);">PAR_markw</div>
<div class="t" style="left:460.2px;top:281.3px;height:16px;line-height:16px;font-size:12.6px;color:#000;transform:scaleX(1.0604);">markw</div>
<div style="left:636px;top:281px;width:15px;height:18px;background:linear-gradient(#e6effd,#c4d6f4 50%,#a2bde9);"></div>
<div style="left:638px;top:295px;width:2px;height:2px;background:#161616;"></div>
<div style="left:642px;top:295px;width:2px;height:2px;background:#161616;"></div>
<div style="left:646px;top:295px;width:2px;height:2px;background:#161616;"></div>
<div style="left:268px;top:300px;width:384px;height:1px;background:#d4d4d4;"></div>
<div class="t" style="left:273.3px;top:303.3px;height:16px;line-height:16px;font-size:12.6px;color:#000;transform:scaleX(0.9591);">PAR_markn</div>
<div class="t" style="left:460.2px;top:302.3px;height:16px;line-height:16px;font-size:12.6px;color:#000;transform:scaleX(1.0324);">markn</div>
<div style="left:636px;top:302px;width:15px;height:18px;background:linear-gradient(#e6effd,#c4d6f4 50%,#a2bde9);"></div>
<div style="left:638px;top:316px;width:2px;height:2px;background:#161616;"></div>
<div style="left:642px;top:316px;width:2px;height:2px;background:#161616;"></div>
<div style="left:646px;top:316px;width:2px;height:2px;background:#161616;"></div>
<div style="left:268px;top:321px;width:384px;height:1px;background:#d4d4d4;"></div>
<div class="t" style="left:273.3px;top:324.3px;height:16px;line-height:16px;font-size:12.6px;color:#000;transform:scaleX(0.9736);">PAR_jbWidth</div>
<div class="t" style="left:460.2px;top:323.3px;height:16px;line-height:16px;font-size:12.6px;color:#000;transform:scaleX(1.0113);">0.015 mm</div>
<div style="left:268px;top:342px;width:384px;height:1px;background:#d4d4d4;"></div>
<div class="t" style="left:273.3px;top:345.3px;height:16px;line-height:16px;font-size:12.6px;color:#000;transform:scaleX(0.9676);">PAR_ppres</div>
<div class="t" style="left:460.2px;top:344.3px;height:16px;line-height:16px;font-size:12.6px;color:#000;transform:scaleX(1.0132);">0.0001 mm</div>
<div style="left:268px;top:363px;width:384px;height:1px;background:#d4d4d4;"></div>
<div class="t" style="left:273.3px;top:366.3px;height:16px;line-height:16px;font-size:12.6px;color:#000;transform:scaleX(0.9341);">PAR_inverseJB</div>
<div style="left:457px;top:368px;width:13px;height:13px;background:#1161c4;border-radius:3px;"></div>
<svg class="a" style="left:457px;top:368px" width="13" height="13" viewBox="0 0 13 13" fill="none" stroke="#fff" stroke-width="1.2"><path d="M3.2 6.8l2.3 2.2 4.4-4.6"/></svg>
<div style="left:268px;top:384px;width:384px;height:1px;background:#d4d4d4;"></div>
<div class="t" style="left:273.3px;top:387.3px;height:16px;line-height:16px;font-size:12.6px;color:#000;transform:scaleX(0.9480);">PAR_twinPorts_HalfJB</div>
<div style="left:457px;top:389px;width:13px;height:13px;background:#fff;border:1px solid #5c5c5c;border-radius:3px;box-sizing:border-box;"></div>
<div style="left:268px;top:405px;width:384px;height:1px;background:#d4d4d4;"></div>
<div class="t" style="left:273.3px;top:408.3px;height:16px;line-height:16px;font-size:12.6px;color:#000;transform:scaleX(0.9168);">PAR_Length_JB</div>
<div class="t" style="left:460.2px;top:407.3px;height:16px;line-height:16px;font-size:12.6px;color:#000;transform:scaleX(1.0129);">0.45 mm</div>
<div style="left:268px;top:426px;width:384px;height:1px;background:#d4d4d4;"></div>
<div class="t" style="left:273.3px;top:429.3px;height:16px;line-height:16px;font-size:12.6px;color:#000;transform:scaleX(0.9375);">PAR_Length_HalfJB</div>
<div class="t" style="left:460.2px;top:428.3px;height:16px;line-height:16px;font-size:12.6px;color:#000;transform:scaleX(1.0103);">0.1 mm</div>
<div style="left:268px;top:174px;width:1px;height:273px;background:#a6a6a6;"></div>
<div style="left:454px;top:174px;width:1px;height:273px;background:#d0d0d0;"></div>
<div style="left:254px;top:476px;width:399px;height:58px;background:#f0f0f0;border:1px solid #a0a0a0;box-sizing:border-box;"></div>
<div class="t" style="left:260.3px;top:482.8px;height:16px;line-height:16px;font-size:12.6px;color:#000;transform:scaleX(1.0554);">Redraw the photovoltaic manufacturing graph based on the</div>
<div class="t" style="left:260.3px;top:500.0px;height:16px;line-height:16px;font-size:12.6px;color:#000;transform:scaleX(1.0337);">scanning graph.</div>
<div style="left:505px;top:544.5px;width:146.5px;height:20px;background:#fafafa;border:1px solid #eaeaea;border-radius:4px;box-sizing:border-box;"></div>
<div class="t" style="left:547.5px;top:547.3px;height:16px;line-height:16px;font-size:12px;color:#9c9c9c;transform:scaleX(0.9092);">Get defaults</div>
<div style="left:249px;top:576px;width:407px;height:1px;background:#909090;"></div>
<div style="left:289px;top:588px;width:72.5px;height:21px;background:#fdfdfd;border:1px solid #d2d2d2;border-bottom-color:#bcbcbc;border-radius:4px;box-sizing:border-box;"></div>
<div class="t" style="left:317.95px;top:591.0px;height:16px;line-height:16px;font-size:12px;color:#000;transform:scaleX(0.8137);">OK</div>
<div style="left:373px;top:588px;width:72.5px;height:21px;background:#fdfdfd;border:1px solid #d2d2d2;border-bottom-color:#bcbcbc;border-radius:4px;box-sizing:border-box;"></div>
<div class="t" style="left:399.4px;top:591.0px;height:16px;line-height:16px;font-size:12px;color:#000;transform:scaleX(0.8721);">Run</div>
<div style="left:457px;top:588px;width:72.5px;height:21px;background:#fdfdfd;border:1px solid #d2d2d2;border-bottom-color:#bcbcbc;border-radius:4px;box-sizing:border-box;"></div>
<div class="t" style="left:477.2px;top:591.0px;height:16px;line-height:16px;font-size:12px;color:#000;transform:scaleX(0.8458);">Cancel</div>
<div style="left:541px;top:588px;width:72.5px;height:21px;background:#fdfdfd;border:1px solid #d2d2d2;border-bottom-color:#bcbcbc;border-radius:4px;box-sizing:border-box;"></div>
<div class="t" style="left:563.9px;top:591.0px;height:16px;line-height:16px;font-size:12px;color:#000;transform:scaleX(0.8729);">Apply</div>
<div style="left:654.0px;top:615.5px;width:1.5px;height:1.5px;background:#a8a8a8;"></div>
<div style="left:657.0px;top:612.5px;width:1.5px;height:1.5px;background:#a8a8a8;"></div>
<div style="left:657.0px;top:615.5px;width:1.5px;height:1.5px;background:#a8a8a8;"></div>
<div style="left:660.0px;top:609.5px;width:1.5px;height:1.5px;background:#a8a8a8;"></div>
<div style="left:660.0px;top:612.5px;width:1.5px;height:1.5px;background:#a8a8a8;"></div>
<div style="left:660.0px;top:615.5px;width:1.5px;height:1.5px;background:#a8a8a8;"></div>
</body></html>
